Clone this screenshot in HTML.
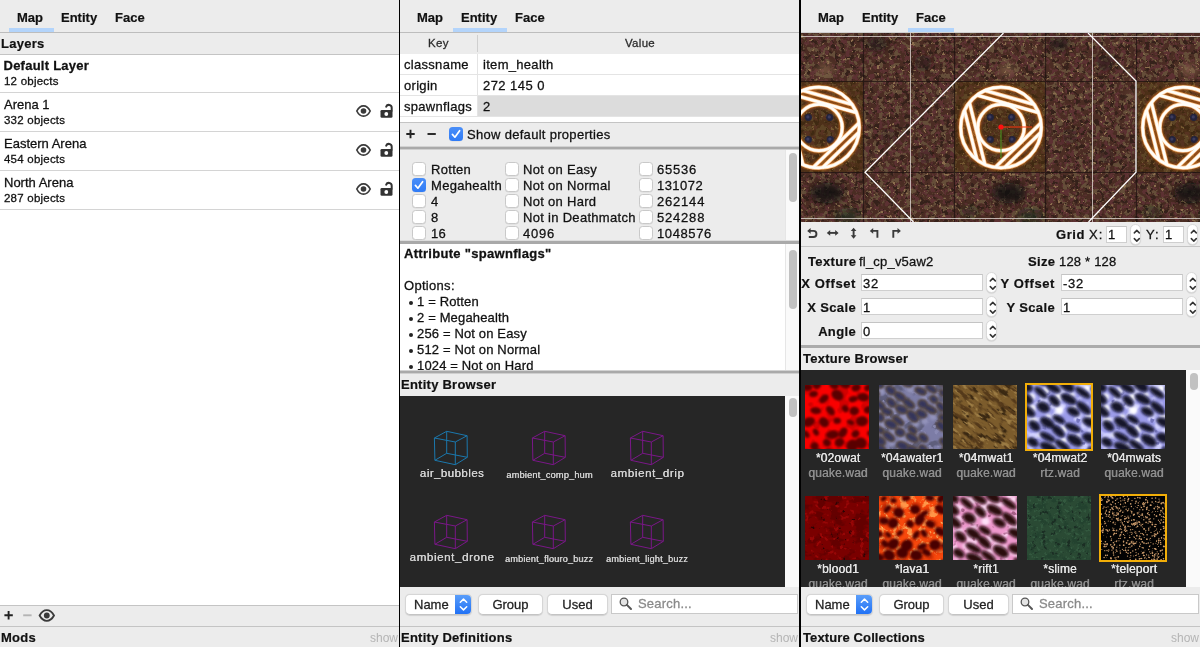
<!DOCTYPE html>
<html>
<head>
<meta charset="utf-8">
<title>Inspector</title>
<style>
*{box-sizing:border-box;margin:0;padding:0}
html,body{width:1200px;height:647px;overflow:hidden;background:#ececec}
body{position:relative;font-family:"Liberation Sans",sans-serif;font-size:13px;color:#111;-webkit-font-smoothing:antialiased}
.abs{position:absolute}
.panel{position:absolute;top:0;height:647px;overflow:hidden;background:#ececec}
#root{position:absolute;left:0;top:0;width:1200px;height:647px;will-change:transform;background:transparent}
#p1{left:0;width:399px}
#p2{left:400px;width:399px}
#p3{left:801px;width:399px}
.vline{position:absolute;top:0;height:647px;background:#000}
.tab{position:absolute;top:10px;font-weight:bold;font-size:13px;line-height:15px;color:#111;white-space:nowrap}
.tabul{position:absolute;top:28px;height:4px;background:#b3d4fb}
.hline{position:absolute;left:0;width:100%;height:1px;background:#c4c4c4}
.hdr{position:absolute;left:0;width:100%;font-weight:bold;font-size:13px;line-height:15px;color:#111;white-space:nowrap}
.hdr span{position:absolute;left:2px;letter-spacing:.25px}
#p1 .hdr span,#p2 .hdr span{left:1px}
#p2 .t{letter-spacing:.3px}
.show{position:absolute;right:1px;font-size:12px;line-height:14px;color:#b4b4b4;font-weight:normal}
.t{position:absolute;white-space:nowrap;line-height:15px;-webkit-text-stroke:.28px currentColor}
.inp,.btn{-webkit-text-stroke:.28px currentColor}
.tab,.hdr span,.lab{-webkit-text-stroke:.2px currentColor}
.b{font-weight:bold}
.split{position:absolute;left:0;width:100%;background:linear-gradient(#d2d2d2 0,#d2d2d2 25%,#a9a9a9 25%,#a9a9a9 75%,#cfcfcf 75%)}

.cb{position:absolute;width:14px;height:14px;border-radius:3.5px;background:#fff;border:1px solid #c9c9c9;box-shadow:0 .5px .5px rgba(0,0,0,.08)}
.cb.on{background:linear-gradient(#4a8ef8,#2f7bf6);border:none}
.cb.on svg{position:absolute;left:0;top:0}
.sb{position:absolute;background:#fafafa;border-left:1px solid #e6e6e6}
.th{position:absolute;width:8px;border-radius:4px;background:#c1c1c1}
.btn{position:absolute;height:21px;border-radius:5px;background:#fff;border:1px solid #d6d6d6;border-bottom-color:#c4c4c4;box-shadow:0 .5px 1px rgba(0,0,0,.12);text-align:center;font-size:13px;line-height:19px;color:#222}
.dark{position:absolute;background:#262626;overflow:hidden}
.el{position:absolute;color:#d4d4d4;text-shadow:.3px 0 0 currentColor;white-space:nowrap;text-align:center;transform:translateX(-50%)}

.inp{position:absolute;height:17px;background:#fff;border:1px solid #cfcfcf;border-top-color:#c4c4c4;font-size:13px;line-height:17px;padding-left:1px;letter-spacing:.7px;white-space:nowrap;overflow:hidden}
.stp{position:absolute;width:11.6px;margin-left:-.3px;height:21px;border-radius:5.8px;background:#fff;border:.5px solid #d9d9d9;box-shadow:0 .5px 1px rgba(0,0,0,.15)}
.stp svg{position:absolute;left:0;top:0}
.lab{position:absolute;letter-spacing:.35px;font-weight:bold;font-size:13px;line-height:15px;white-space:nowrap;text-align:right;color:#111}
.tl{position:absolute;white-space:nowrap;text-align:center;transform:translateX(-50%);margin-left:1px;letter-spacing:.15px;text-shadow:.35px 0 0 currentColor;font-size:12px;line-height:15px}
</style>
</head>
<body>
<div id="root">

<!-- ================= PANEL 1 : MAP ================= -->
<div class="panel" id="p1">
  <div class="tab" style="left:17px">Map</div>
  <div class="tab" style="left:61px">Entity</div>
  <div class="tab" style="left:115px">Face</div>
  <div class="tabul" style="left:9px;width:45px"></div>
  <div class="hline" style="top:32px;background:#bdbdbd"></div>
  <div class="hdr" style="top:36px"><span>Layers</span></div>
  <div class="abs" id="layers" style="left:0;top:54px;width:399px;height:551px;background:#fff">
<div class="abs" style="left:0;top:0px;width:399px;height:39px;border-bottom:1px solid #d4d4d4"><div class="t b" style="left:3.5px;top:4px;font-size:13px;letter-spacing:.25px">Default Layer</div><div class="t" style="left:4px;top:20px;font-size:11.5px;letter-spacing:.22px">12 objects</div></div>
<div class="abs" style="left:0;top:39px;width:399px;height:39px;border-bottom:1px solid #d4d4d4"><div class="t" style="left:4px;top:4px;font-size:13px">Arena 1</div><div class="t" style="left:4px;top:20px;font-size:11.5px;letter-spacing:.22px">332 objects</div><svg class="abs" style="left:355px;top:11px" width="17" height="14" viewBox="0 0 17 14"><path d="M1.8 7 C3.6 3.3 6 1.8 8.5 1.8 C11 1.8 13.4 3.3 15.2 7 C13.4 10.7 11 12.2 8.5 12.2 C6 12.2 3.6 10.7 1.8 7 Z" fill="none" stroke="#3a3a3a" stroke-width="1.7"/><circle cx="8.5" cy="7" r="2.8" fill="#3a3a3a"/></svg><svg class="abs" style="left:379px;top:10px" width="16" height="16" viewBox="0 0 16 16"><rect x="1.5" y="7" width="12" height="7.8" rx="1.3" fill="#333"/><circle cx="7.3" cy="11" r="1.9" fill="#fff"/><path d="M12.7 7.5 V4.7 A2.85 2.85 0 0 0 7.2 3.7" fill="none" stroke="#333" stroke-width="2" stroke-linecap="round"/></svg></div>
<div class="abs" style="left:0;top:78px;width:399px;height:39px;border-bottom:1px solid #d4d4d4"><div class="t" style="left:4px;top:4px;font-size:13px">Eastern Arena</div><div class="t" style="left:4px;top:20px;font-size:11.5px;letter-spacing:.22px">454 objects</div><svg class="abs" style="left:355px;top:11px" width="17" height="14" viewBox="0 0 17 14"><path d="M1.8 7 C3.6 3.3 6 1.8 8.5 1.8 C11 1.8 13.4 3.3 15.2 7 C13.4 10.7 11 12.2 8.5 12.2 C6 12.2 3.6 10.7 1.8 7 Z" fill="none" stroke="#3a3a3a" stroke-width="1.7"/><circle cx="8.5" cy="7" r="2.8" fill="#3a3a3a"/></svg><svg class="abs" style="left:379px;top:10px" width="16" height="16" viewBox="0 0 16 16"><rect x="1.5" y="7" width="12" height="7.8" rx="1.3" fill="#333"/><circle cx="7.3" cy="11" r="1.9" fill="#fff"/><path d="M12.7 7.5 V4.7 A2.85 2.85 0 0 0 7.2 3.7" fill="none" stroke="#333" stroke-width="2" stroke-linecap="round"/></svg></div>
<div class="abs" style="left:0;top:117px;width:399px;height:39px;border-bottom:1px solid #d4d4d4"><div class="t" style="left:4px;top:4px;font-size:13px">North Arena</div><div class="t" style="left:4px;top:20px;font-size:11.5px;letter-spacing:.22px">287 objects</div><svg class="abs" style="left:355px;top:11px" width="17" height="14" viewBox="0 0 17 14"><path d="M1.8 7 C3.6 3.3 6 1.8 8.5 1.8 C11 1.8 13.4 3.3 15.2 7 C13.4 10.7 11 12.2 8.5 12.2 C6 12.2 3.6 10.7 1.8 7 Z" fill="none" stroke="#3a3a3a" stroke-width="1.7"/><circle cx="8.5" cy="7" r="2.8" fill="#3a3a3a"/></svg><svg class="abs" style="left:379px;top:10px" width="16" height="16" viewBox="0 0 16 16"><rect x="1.5" y="7" width="12" height="7.8" rx="1.3" fill="#333"/><circle cx="7.3" cy="11" r="1.9" fill="#fff"/><path d="M12.7 7.5 V4.7 A2.85 2.85 0 0 0 7.2 3.7" fill="none" stroke="#333" stroke-width="2" stroke-linecap="round"/></svg></div>
</div>
  <div class="hline" style="top:54px"></div>
  <div class="hline" style="top:605px"></div>
  <svg class="abs" style="left:0;top:606px" width="70" height="20" viewBox="0 0 70 20">
    <path d="M4.4 9.3 H12.8 M8.6 5.1 V13.5" stroke="#222" stroke-width="1.9" fill="none"/>
    <path d="M23.2 9.3 H31.6" stroke="#b4b4b4" stroke-width="1.9" fill="none"/>
    <path d="M39.6 9.5 C41.6 5.8 44.2 4.2 46.8 4.2 C49.4 4.2 52 5.8 54 9.5 C52 13.2 49.4 14.8 46.8 14.8 C44.2 14.8 41.6 13.2 39.6 9.5 Z" fill="none" stroke="#3a3a3a" stroke-width="1.8"/><circle cx="46.8" cy="9.5" r="2.9" fill="#3a3a3a"/>
  </svg>
  <div class="hline" style="top:626px"></div>
  <div class="hdr" style="top:630px"><span>Mods</span><div class="show" style="top:1px">show</div></div>
</div>
<div class="vline" style="left:399px;width:1px"></div>

<!-- ================= PANEL 2 : ENTITY ================= -->
<div class="panel" id="p2">
  <div class="tab" style="left:17px">Map</div>
  <div class="tab" style="left:61px">Entity</div>
  <div class="tab" style="left:115px">Face</div>
  <div class="tabul" style="left:53px;width:54px"></div>
  <div class="hline" style="top:32px;background:#bdbdbd"></div>
<div class="abs" style="left:0;top:33px;width:399px;height:21px;background:#ececec"></div>
<div class="abs" style="left:0;top:54px;width:399px;height:68px;background:#fff"></div>
<div class="abs" style="left:77px;top:35px;width:1px;height:17px;background:#cfcfcf"></div>
<div class="t" style="left:28px;top:36px;font-size:11.5px;color:#2a2a2a">Key</div>
<div class="t" style="left:225px;top:36px;font-size:11.5px;color:#2a2a2a">Value</div>
<div class="abs" style="left:78px;top:96px;width:321px;height:20px;background:#dcdcdc"></div>
<div class="abs" style="left:0;top:74px;width:399px;height:1px;background:#e4e4e4"></div>
<div class="abs" style="left:0;top:95px;width:399px;height:1px;background:#e4e4e4"></div>
<div class="abs" style="left:0;top:116px;width:399px;height:1px;background:#e4e4e4"></div>
<div class="abs" style="left:77px;top:54px;width:1px;height:63px;background:#e4e4e4"></div>
<div class="t" style="left:4px;top:57px">classname</div><div class="t" style="left:83px;top:57px">item_health</div>
<div class="t" style="left:4px;top:78px">origin</div><div class="t" style="left:83px;top:78px;letter-spacing:.45px">272 145 0</div>
<div class="t" style="left:4px;top:99px">spawnflags</div><div class="t" style="left:83px;top:99px">2</div>
<div class="hline" style="top:122px"></div>
<svg class="abs" style="left:0;top:123px" width="50" height="23" viewBox="0 0 50 23"><path d="M6.3 11 H14.7 M10.5 6.8 V15.2" stroke="#222" stroke-width="1.9" fill="none"/><path d="M27.5 11 H35.8" stroke="#222" stroke-width="1.9" fill="none"/></svg>
<div class="cb on" style="left:49px;top:127px"><svg width="14" height="14" viewBox="0 0 14 14"><path d="M3.4 7.4 L5.9 10.2 L10.6 3.7" fill="none" stroke="#fff" stroke-width="1.7" stroke-linecap="round" stroke-linejoin="round"/></svg></div>
<div class="t" style="left:67px;top:127px">Show default properties</div>
<div class="split" style="top:146px;height:4px"></div>
<div class="abs" style="left:0;top:150px;width:399px;height:90px;overflow:hidden">
<div class="cb" style="left:12px;top:12px"></div><div class="t" style="left:31px;top:12px">Rotten</div>
<div class="cb on" style="left:12px;top:28px"><svg width="14" height="14" viewBox="0 0 14 14"><path d="M3.4 7.4 L5.9 10.2 L10.6 3.7" fill="none" stroke="#fff" stroke-width="1.7" stroke-linecap="round" stroke-linejoin="round"/></svg></div><div class="t" style="left:31px;top:28px">Megahealth</div>
<div class="cb" style="left:12px;top:44px"></div><div class="t" style="left:31px;top:44px;letter-spacing:.8px">4</div>
<div class="cb" style="left:12px;top:60px"></div><div class="t" style="left:31px;top:60px;letter-spacing:.8px">8</div>
<div class="cb" style="left:12px;top:76px"></div><div class="t" style="left:31px;top:76px;letter-spacing:.2px">16</div>
<div class="cb" style="left:105px;top:12px"></div><div class="t" style="left:123px;top:12px">Not on Easy</div>
<div class="cb" style="left:105px;top:28px"></div><div class="t" style="left:123px;top:28px">Not on Normal</div>
<div class="cb" style="left:105px;top:44px"></div><div class="t" style="left:123px;top:44px">Not on Hard</div>
<div class="cb" style="left:105px;top:60px"></div><div class="t" style="left:123px;top:60px">Not in Deathmatch</div>
<div class="cb" style="left:105px;top:76px"></div><div class="t" style="left:123px;top:76px;letter-spacing:.8px">4096</div>
<div class="cb" style="left:239px;top:12px"></div><div class="t" style="left:257px;top:12px;letter-spacing:.8px">65536</div>
<div class="cb" style="left:239px;top:28px"></div><div class="t" style="left:257px;top:28px;letter-spacing:.45px">131072</div>
<div class="cb" style="left:239px;top:44px"></div><div class="t" style="left:257px;top:44px;letter-spacing:.8px">262144</div>
<div class="cb" style="left:239px;top:60px"></div><div class="t" style="left:257px;top:60px;letter-spacing:.8px">524288</div>
<div class="cb" style="left:239px;top:76px"></div><div class="t" style="left:257px;top:76px;letter-spacing:.6px">1048576</div>
<div class="sb" style="left:385px;top:0;width:14px;height:90px"></div><div class="th" style="left:389px;top:3px;height:49px"></div>
</div>
<div class="split" style="top:240px;height:5px;background:linear-gradient(#dcdcdc 0,#dcdcdc 20%,#a9a9a9 20%,#a9a9a9 80%,#d0d0d0 80%)"></div>
<div class="abs" style="left:0;top:244px;width:399px;height:126px;background:#fff;overflow:hidden">
<div class="t b" style="left:4px;top:2px;letter-spacing:.3px">Attribute "spawnflags"</div>
<div class="t" style="left:4px;top:34px">Options:</div>
<div class="abs" style="left:9px;top:57px;width:4px;height:4px;border-radius:2px;background:#222"></div><div class="t" style="left:17px;top:50px;letter-spacing:.15px">1 = Rotten</div>
<div class="abs" style="left:9px;top:73px;width:4px;height:4px;border-radius:2px;background:#222"></div><div class="t" style="left:17px;top:66px;letter-spacing:.15px">2 = Megahealth</div>
<div class="abs" style="left:9px;top:89px;width:4px;height:4px;border-radius:2px;background:#222"></div><div class="t" style="left:17px;top:82px;letter-spacing:.15px">256 = Not on Easy</div>
<div class="abs" style="left:9px;top:105px;width:4px;height:4px;border-radius:2px;background:#222"></div><div class="t" style="left:17px;top:98px;letter-spacing:.15px">512 = Not on Normal</div>
<div class="abs" style="left:9px;top:121px;width:4px;height:4px;border-radius:2px;background:#222"></div><div class="t" style="left:17px;top:114px;letter-spacing:.15px">1024 = Not on Hard</div>
<div class="sb" style="left:385px;top:0;width:14px;height:126px"></div><div class="th" style="left:389px;top:6px;height:59px"></div>
</div>
<div class="split" style="top:370px;height:4px"></div>
<div class="hdr" style="top:377px"><span>Entity Browser</span></div>
<div class="dark" id="eb" style="left:0;top:396px;width:386px;height:191px">
<svg class="abs" style="left:0;top:0" width="386" height="191" viewBox="0 0 386 191"><path d="M34.4 42.0 L46.7 35.3 M46.7 35.3 L67.1 39.7 M67.1 39.7 L55.3 46.0 M55.3 46.0 L34.4 42.0 M34.9 64.3 L46.7 57.3 M46.7 57.3 L67.3 61.3 M67.3 61.3 L55.3 68.7 M55.3 68.7 L34.9 64.3 M34.4 42.0 L34.9 64.3 M46.7 35.3 L46.7 57.3 M67.1 39.7 L67.3 61.3 M55.3 46.0 L55.3 68.7" stroke="#1b78ad" stroke-width="1" fill="none"/><path d="M132.4 42.0 L144.7 35.3 M144.7 35.3 L165.1 39.7 M165.1 39.7 L153.3 46.0 M153.3 46.0 L132.4 42.0 M132.9 64.3 L144.7 57.3 M144.7 57.3 L165.3 61.3 M165.3 61.3 L153.3 68.7 M153.3 68.7 L132.9 64.3 M132.4 42.0 L132.9 64.3 M144.7 35.3 L144.7 57.3 M165.1 39.7 L165.3 61.3 M153.3 46.0 L153.3 68.7" stroke="#7a1788" stroke-width="1" fill="none"/><path d="M230.4 42.0 L242.7 35.3 M242.7 35.3 L263.1 39.7 M263.1 39.7 L251.3 46.0 M251.3 46.0 L230.4 42.0 M230.9 64.3 L242.7 57.3 M242.7 57.3 L263.3 61.3 M263.3 61.3 L251.3 68.7 M251.3 68.7 L230.9 64.3 M230.4 42.0 L230.9 64.3 M242.7 35.3 L242.7 57.3 M263.1 39.7 L263.3 61.3 M251.3 46.0 L251.3 68.7" stroke="#7a1788" stroke-width="1" fill="none"/><path d="M34.4 126.0 L46.7 119.3 M46.7 119.3 L67.1 123.7 M67.1 123.7 L55.3 130.0 M55.3 130.0 L34.4 126.0 M34.9 148.3 L46.7 141.3 M46.7 141.3 L67.3 145.3 M67.3 145.3 L55.3 152.7 M55.3 152.7 L34.9 148.3 M34.4 126.0 L34.9 148.3 M46.7 119.3 L46.7 141.3 M67.1 123.7 L67.3 145.3 M55.3 130.0 L55.3 152.7" stroke="#7a1788" stroke-width="1" fill="none"/><path d="M132.4 126.0 L144.7 119.3 M144.7 119.3 L165.1 123.7 M165.1 123.7 L153.3 130.0 M153.3 130.0 L132.4 126.0 M132.9 148.3 L144.7 141.3 M144.7 141.3 L165.3 145.3 M165.3 145.3 L153.3 152.7 M153.3 152.7 L132.9 148.3 M132.4 126.0 L132.9 148.3 M144.7 119.3 L144.7 141.3 M165.1 123.7 L165.3 145.3 M153.3 130.0 L153.3 152.7" stroke="#7a1788" stroke-width="1" fill="none"/><path d="M230.4 126.0 L242.7 119.3 M242.7 119.3 L263.1 123.7 M263.1 123.7 L251.3 130.0 M251.3 130.0 L230.4 126.0 M230.9 148.3 L242.7 141.3 M242.7 141.3 L263.3 145.3 M263.3 145.3 L251.3 152.7 M251.3 152.7 L230.9 148.3 M230.4 126.0 L230.9 148.3 M242.7 119.3 L242.7 141.3 M263.1 123.7 L263.3 145.3 M251.3 130.0 L251.3 152.7" stroke="#7a1788" stroke-width="1" fill="none"/></svg>
<div class="el" style="left:52.0px;top:70px;font-size:11.5px;line-height:14px;letter-spacing:0.45px">air_bubbles</div>
<div class="el" style="left:149.5px;top:72px;font-size:9.2px;line-height:14px;letter-spacing:0.20px">ambient_comp_hum</div>
<div class="el" style="left:247.5px;top:70px;font-size:11.5px;line-height:14px;letter-spacing:.62px">ambient_drip</div>
<div class="el" style="left:52.0px;top:154px;font-size:11.6px;line-height:14px;letter-spacing:.58px">ambient_drone</div>
<div class="el" style="left:149.0px;top:156px;font-size:9.1px;line-height:14px;letter-spacing:0.20px">ambient_flouro_buzz</div>
<div class="el" style="left:247.0px;top:156px;font-size:9.1px;line-height:14px;letter-spacing:0.20px">ambient_light_buzz</div>
</div>
<div class="sb" style="left:385px;top:396px;width:14px;height:191px;border-left:none"></div><div class="th" style="left:389px;top:398px;height:19px"></div>
<div class="abs bar" style="left:0;top:587px;width:399px;height:39px">
<div class="btn" style="left:5px;top:7px;width:67px;text-align:left;padding-left:8px;overflow:hidden">Name<div class="abs" style="right:-1px;top:-1px;width:17px;height:21px;background:linear-gradient(#5da0fa,#1e6ff5)"><svg width="17" height="21" viewBox="0 0 17 21"><path d="M5.3 8.3 L8.5 5.1 L11.7 8.3 M5.3 12.7 L8.5 15.9 L11.7 12.7" fill="none" stroke="#fff" stroke-width="1.5" stroke-linecap="round" stroke-linejoin="round"/></svg></div></div>
<div class="btn" style="left:78px;top:7px;width:65px">Group</div>
<div class="btn" style="left:147px;top:7px;width:61px">Used</div>
<div class="abs" style="left:211px;top:7px;width:187px;height:20px;background:#fff;border:1px solid #c9c9c9"></div>
<svg class="abs" style="left:218px;top:9px" width="16" height="16" viewBox="0 0 16 16"><circle cx="6" cy="6" r="3.8" fill="#e4e4e4" stroke="#555" stroke-width="1.3"/><path d="M8.9 8.9 L13 13" stroke="#555" stroke-width="2" stroke-linecap="round"/></svg>
<div class="t" style="left:238px;top:9px;color:#8a8a8a;letter-spacing:.2px">Search...</div>
</div>
<div class="hline" style="top:626px"></div>
<div class="hdr" style="top:630px"><span>Entity Definitions</span><div class="show" style="top:1px">show</div></div>
</div>
<div class="vline" style="left:799px;width:2px"></div>

<!-- ================= PANEL 3 : FACE ================= -->
<div class="panel" id="p3">
  <div class="tab" style="left:17px">Map</div>
  <div class="tab" style="left:61px">Entity</div>
  <div class="tab" style="left:115px">Face</div>
  <div class="tabul" style="left:107px;width:46px"></div>
  <div class="hline" style="top:32px;background:#d0d0d0"></div>
<div class="abs" id="tv" style="left:0;top:33px;width:399px;height:189px;background:#54362c;overflow:hidden">
<svg class="abs" style="left:0;top:0" width="399" height="189" viewBox="801 33 399 189">
<defs>
<filter id="fbr" x="0" y="0" width="100%" height="100%" color-interpolation-filters="sRGB">
<feFlood flood-color="#4a2c23" result="base"/>
<feTurbulence type="fractalNoise" baseFrequency="0.2" numOctaves="3" seed="3"/>
<feColorMatrix type="matrix" values="0 0 0 0 0.361  0 0 0 0 0.192  0 0 0 0 0.196  14 0 0 0 -6.86" result="m1"/>
<feTurbulence type="fractalNoise" baseFrequency="0.19" numOctaves="3" seed="8"/>
<feColorMatrix type="matrix" values="0 0 0 0 0.396  0 0 0 0 0.306  0 0 0 0 0.224  14 0 0 0 -7.63" result="m2"/>
<feTurbulence type="fractalNoise" baseFrequency="0.2" numOctaves="3" seed="15"/>
<feColorMatrix type="matrix" values="0 0 0 0 0.208  0 0 0 0 0.129  0 0 0 0 0.102  16 0 0 0 -9.60" result="m3"/>
<feTurbulence type="fractalNoise" baseFrequency="0.26" numOctaves="3" seed="21"/>
<feColorMatrix type="matrix" values="0 0 0 0 0.549  0 0 0 0 0.431  0 0 0 0 0.306  20 0 0 0 -13.80" result="m4"/>
<feMerge><feMergeNode in="base"/><feMergeNode in="m1"/><feMergeNode in="m2"/><feMergeNode in="m3"/><feMergeNode in="m4"/></feMerge>
</filter>
<filter id="fbl" x="-20%" y="-20%" width="140%" height="140%"><feGaussianBlur stdDeviation="3.5"/></filter>
<filter id="fgl" x="-20%" y="-20%" width="140%" height="140%"><feGaussianBlur stdDeviation="1"/></filter>
<g id="emb" fill="none" stroke-linejoin="round">
<g id="embs">
<circle cx="0" cy="0" r="40.3"/>
<circle cx="0" cy="0" r="23.2"/>
<path d="M40.0 -4.5 L-5.8 39.9 M40.0 4.7 L3.4 40.2 M-16.1 37.0 L-31.6 -25.0 M-24.0 32.3 L-36.5 -17.1 M-24.0 -32.4 L37.4 -14.9 M-16.0 -37.0 L33.1 -23.0"/>
</g>
</g>
</defs>
<rect x="801" y="33" width="399" height="189" fill="#54362c"/>
<rect x="801" y="33" width="399" height="189" filter="url(#fbr)"/>
<rect x="772" y="81" width="91" height="91" fill="#503808" opacity=".4"/>
<rect x="954" y="81" width="91" height="91" fill="#503808" opacity=".4"/>
<rect x="1136" y="81" width="91" height="91" fill="#503808" opacity=".4"/>
<g filter="url(#fbl)">
<ellipse cx="827" cy="193" rx="17" ry="10" fill="#0a120e" opacity="0.80"/>
<ellipse cx="848" cy="216" rx="12" ry="6" fill="#10301c" opacity="0.60"/>
<ellipse cx="877" cy="44" rx="11" ry="7" fill="#181412" opacity="0.60"/>
<ellipse cx="825" cy="70" rx="9" ry="6" fill="#9a7858" opacity="0.50"/>
<ellipse cx="888" cy="136" rx="8" ry="8" fill="#2a1c18" opacity="0.35"/>
<ellipse cx="1009" cy="193" rx="17" ry="10" fill="#0a120e" opacity="0.80"/>
<ellipse cx="1030" cy="216" rx="12" ry="6" fill="#10301c" opacity="0.60"/>
<ellipse cx="970" cy="212" rx="9" ry="5" fill="#122a1a" opacity="0.45"/>
<ellipse cx="1059" cy="44" rx="11" ry="7" fill="#181412" opacity="0.60"/>
<ellipse cx="923" cy="63" rx="9" ry="8" fill="#1c1614" opacity="0.55"/>
<ellipse cx="1007" cy="70" rx="9" ry="6" fill="#9a7858" opacity="0.50"/>
<ellipse cx="950" cy="96" rx="7" ry="5" fill="#8a6a50" opacity="0.30"/>
<ellipse cx="1070" cy="136" rx="8" ry="8" fill="#2a1c18" opacity="0.35"/>
<ellipse cx="925" cy="156" rx="8" ry="8" fill="#2a1c18" opacity="0.30"/>
<ellipse cx="1191" cy="193" rx="17" ry="10" fill="#0a120e" opacity="0.80"/>
<ellipse cx="1212" cy="216" rx="12" ry="6" fill="#10301c" opacity="0.60"/>
<ellipse cx="1152" cy="212" rx="9" ry="5" fill="#122a1a" opacity="0.45"/>
<ellipse cx="1105" cy="63" rx="9" ry="8" fill="#1c1614" opacity="0.55"/>
<ellipse cx="1189" cy="70" rx="9" ry="6" fill="#9a7858" opacity="0.50"/>
<ellipse cx="1132" cy="96" rx="7" ry="5" fill="#8a6a50" opacity="0.30"/>
<ellipse cx="1107" cy="156" rx="8" ry="8" fill="#2a1c18" opacity="0.30"/>
</g>
<path d="M863.5 33 V222 M954.5 33 V222 M1045.5 33 V222 M1136.5 33 V222 M801 81.5 H1200 M801 172.5 H1200" stroke="#1e1210" stroke-width="1.2" opacity=".75" fill="none"/>
<g transform="translate(819 127.5)">
<circle cx="-10.7" cy="-10.2" r="3.6" fill="#23233c"/><circle cx="-11.1" cy="-10.6" r="1.6" fill="#3c3c5e"/>
<circle cx="10.7" cy="-10.2" r="3.6" fill="#23233c"/><circle cx="10.3" cy="-10.6" r="1.6" fill="#3c3c5e"/>
<circle cx="-10.7" cy="12.0" r="3.6" fill="#23233c"/><circle cx="-11.1" cy="11.6" r="1.6" fill="#3c3c5e"/>
<circle cx="11.3" cy="12.0" r="3.6" fill="#23233c"/><circle cx="10.9" cy="11.6" r="1.6" fill="#3c3c5e"/>
<use href="#embs" stroke="#e87418" stroke-width="5.6" opacity=".6" filter="url(#fgl)" fill="none"/>
<use href="#embs" stroke="#fbc48e" stroke-width="4.0" fill="none" stroke-linejoin="round"/>
<use href="#embs" stroke="#fffdf8" stroke-width="2.7" fill="none" stroke-linejoin="round"/>
</g>
<g transform="translate(1001 127.5)">
<circle cx="-10.7" cy="-10.2" r="3.6" fill="#23233c"/><circle cx="-11.1" cy="-10.6" r="1.6" fill="#3c3c5e"/>
<circle cx="10.7" cy="-10.2" r="3.6" fill="#23233c"/><circle cx="10.3" cy="-10.6" r="1.6" fill="#3c3c5e"/>
<circle cx="-10.7" cy="12.0" r="3.6" fill="#23233c"/><circle cx="-11.1" cy="11.6" r="1.6" fill="#3c3c5e"/>
<circle cx="11.3" cy="12.0" r="3.6" fill="#23233c"/><circle cx="10.9" cy="11.6" r="1.6" fill="#3c3c5e"/>
<use href="#embs" stroke="#e87418" stroke-width="5.6" opacity=".6" filter="url(#fgl)" fill="none"/>
<use href="#embs" stroke="#fbc48e" stroke-width="4.0" fill="none" stroke-linejoin="round"/>
<use href="#embs" stroke="#fffdf8" stroke-width="2.7" fill="none" stroke-linejoin="round"/>
</g>
<g transform="translate(1183 127.5)">
<circle cx="-10.7" cy="-10.2" r="3.6" fill="#23233c"/><circle cx="-11.1" cy="-10.6" r="1.6" fill="#3c3c5e"/>
<circle cx="10.7" cy="-10.2" r="3.6" fill="#23233c"/><circle cx="10.3" cy="-10.6" r="1.6" fill="#3c3c5e"/>
<circle cx="-10.7" cy="12.0" r="3.6" fill="#23233c"/><circle cx="-11.1" cy="11.6" r="1.6" fill="#3c3c5e"/>
<circle cx="11.3" cy="12.0" r="3.6" fill="#23233c"/><circle cx="10.9" cy="11.6" r="1.6" fill="#3c3c5e"/>
<use href="#embs" stroke="#e87418" stroke-width="5.6" opacity=".6" filter="url(#fgl)" fill="none"/>
<use href="#embs" stroke="#fbc48e" stroke-width="4.0" fill="none" stroke-linejoin="round"/>
<use href="#embs" stroke="#fffdf8" stroke-width="2.7" fill="none" stroke-linejoin="round"/>
</g>
<path d="M910.5 33 V222 M1092.5 33 V222 M801 36.5 H1200 M801 218.5 H1200" stroke="#e8e0dc" stroke-width="1" opacity=".75" fill="none"/>
<path d="M1003.5 33 L865 172.3 L913.5 222 M1088 33 L1136 81 V172.3 L1088.5 222" stroke="#fff" stroke-width="1.3" fill="none"/>
<path d="M1001 127 H1032" stroke="#ff3a10" stroke-width="1"/><path d="M1001 127 V158" stroke="#4a9a20" stroke-width="1"/><circle cx="1001" cy="127" r="2.6" fill="#ff1010"/>
</svg>
</div><!--tv-->
<svg class="abs" style="left:0;top:222px" width="110" height="24" viewBox="0 0 110 24" fill="none" stroke="#3a3a3a" stroke-width="1.9">
<path d="M8.6 8.9 H12.4 A3.05 3.05 0 0 1 12.4 15 H7.8"/><path d="M6.2 8.9 L9.6 6.1 V11.7 Z" fill="#3a3a3a" stroke="none"/>
<path d="M28.2 10.9 H35.2"/><path d="M25.8 10.9 L29.2 8.1 V13.7 Z M37.6 10.9 L34.2 8.1 V13.7 Z" fill="#3a3a3a" stroke="none"/>
<path d="M52.6 8.2 V14.2"/><path d="M52.6 5.7 L49.8 9.1 H55.4 Z M52.6 16.7 L49.8 13.3 H55.4 Z" fill="#3a3a3a" stroke="none"/>
<path d="M71.5 8.9 H76.4 V15.8"/><path d="M68.8 8.9 L72.2 6.1 V11.7 Z" fill="#3a3a3a" stroke="none"/>
<path d="M92.3 15.8 V8.9 H97.2"/><path d="M99.9 8.9 L96.5 6.1 V11.7 Z" fill="#3a3a3a" stroke="none"/>
</svg>
<div class="lab" style="left:255px;top:227px;letter-spacing:.6px">Grid</div>
<div class="t" style="left:288px;top:227px;letter-spacing:1px">X:</div>
<div class="inp" style="left:305px;top:226px;width:21px;line-height:15px">1</div>
<div class="stp" style="left:329px;top:224px"><svg width="12" height="21" viewBox="0 0 12 21"><path d="M3.3 7.9 L5.8 5.4 L8.3 7.9 M3.3 13.6 L5.8 16.1 L8.3 13.6" fill="none" stroke="#333" stroke-width="1.5" stroke-linecap="round" stroke-linejoin="round"/></svg></div>
<div class="t" style="left:345px;top:227px;letter-spacing:1px">Y:</div>
<div class="inp" style="left:362px;top:226px;width:21px;line-height:15px">1</div>
<div class="stp" style="left:386px;top:224px"><svg width="12" height="21" viewBox="0 0 12 21"><path d="M3.3 7.9 L5.8 5.4 L8.3 7.9 M3.3 13.6 L5.8 16.1 L8.3 13.6" fill="none" stroke="#333" stroke-width="1.5" stroke-linecap="round" stroke-linejoin="round"/></svg></div>
<div class="hline" style="top:246px"></div>
<div class="lab" style="left:7px;top:254px">Texture</div><div class="t" style="left:58px;top:254px;letter-spacing:.2px">fl_cp_v5aw2</div>
<div class="lab" style="left:227px;top:254px">Size</div><div class="t" style="left:258px;top:254px;letter-spacing:.2px">128 * 128</div>
<div class="lab" style="left:0;width:55px;top:276px;letter-spacing:.6px">X Offset</div><div class="inp" style="left:60px;top:274px;width:122px">32</div>
<div class="stp" style="left:185px;top:272px"><svg width="12" height="21" viewBox="0 0 12 21"><path d="M3.3 7.9 L5.8 5.4 L8.3 7.9 M3.3 13.6 L5.8 16.1 L8.3 13.6" fill="none" stroke="#333" stroke-width="1.5" stroke-linecap="round" stroke-linejoin="round"/></svg></div>
<div class="lab" style="left:190px;width:64px;top:276px;letter-spacing:.6px">Y Offset</div><div class="inp" style="left:260px;top:274px;width:122px">-32</div>
<div class="stp" style="left:385px;top:272px"><svg width="12" height="21" viewBox="0 0 12 21"><path d="M3.3 7.9 L5.8 5.4 L8.3 7.9 M3.3 13.6 L5.8 16.1 L8.3 13.6" fill="none" stroke="#333" stroke-width="1.5" stroke-linecap="round" stroke-linejoin="round"/></svg></div>
<div class="lab" style="left:0;width:55px;top:300px">X Scale</div><div class="inp" style="left:60px;top:298px;width:122px">1</div>
<div class="stp" style="left:185px;top:296px"><svg width="12" height="21" viewBox="0 0 12 21"><path d="M3.3 7.9 L5.8 5.4 L8.3 7.9 M3.3 13.6 L5.8 16.1 L8.3 13.6" fill="none" stroke="#333" stroke-width="1.5" stroke-linecap="round" stroke-linejoin="round"/></svg></div>
<div class="lab" style="left:190px;width:64px;top:300px">Y Scale</div><div class="inp" style="left:260px;top:298px;width:122px">1</div>
<div class="stp" style="left:385px;top:296px"><svg width="12" height="21" viewBox="0 0 12 21"><path d="M3.3 7.9 L5.8 5.4 L8.3 7.9 M3.3 13.6 L5.8 16.1 L8.3 13.6" fill="none" stroke="#333" stroke-width="1.5" stroke-linecap="round" stroke-linejoin="round"/></svg></div>
<div class="lab" style="left:0;width:55px;top:324px">Angle</div><div class="inp" style="left:60px;top:322px;width:122px">0</div>
<div class="stp" style="left:185px;top:320px"><svg width="12" height="21" viewBox="0 0 12 21"><path d="M3.3 7.9 L5.8 5.4 L8.3 7.9 M3.3 13.6 L5.8 16.1 L8.3 13.6" fill="none" stroke="#333" stroke-width="1.5" stroke-linecap="round" stroke-linejoin="round"/></svg></div>
<div class="split" style="top:345px;height:3px;background:#ababab"></div>
<div class="hdr" style="top:351px"><span>Texture Browser</span></div>
<div class="dark" id="tb" style="left:0;top:370px;width:385px;height:217px">
<svg class="abs" style="left:0;top:0" width="385" height="217" viewBox="0 0 385 217">
<defs>
<clipPath id="c64"><rect x="0" y="0" width="64" height="64"/></clipPath>
<filter id="b07" x="-10%" y="-10%" width="120%" height="120%"><feGaussianBlur stdDeviation="0.8"/></filter>
<filter id="b20" x="-10%" y="-10%" width="120%" height="120%"><feGaussianBlur stdDeviation="1.8"/></filter>
<filter id="f02" x="0" y="0" width="100%" height="100%" color-interpolation-filters="sRGB">
<feFlood flood-color="#fa0000" result="base"/>
<feTurbulence type="fractalNoise" baseFrequency="0.09" numOctaves="2" seed="4"/><feColorMatrix type="matrix" values="0 0 0 0 0.831  0 0 0 0 0.000  0 0 0 0 0.000  6 0 0 0 -3.12" result="l0"/>
<feMerge><feMergeNode in="base"/><feMergeNode in="l0"/></feMerge>
</filter>
<filter id="f4a" x="0" y="0" width="100%" height="100%" color-interpolation-filters="sRGB">
<feFlood flood-color="#7c7ca6" result="base"/>
<feTurbulence type="fractalNoise" baseFrequency="0.09" numOctaves="2" seed="9"/><feColorMatrix type="matrix" values="0 0 0 0 0.369  0 0 0 0 0.369  0 0 0 0 0.486  8 0 0 0 -4.00" result="l0"/>
<feTurbulence type="fractalNoise" baseFrequency="0.2" numOctaves="2" seed="12"/><feColorMatrix type="matrix" values="0 0 0 0 0.541  0 0 0 0 0.541  0 0 0 0 0.706  10 0 0 0 -6.20" result="l1"/>
<feMerge><feMergeNode in="base"/><feMergeNode in="l0"/><feMergeNode in="l1"/></feMerge>
</filter>
<filter id="f4m" x="0" y="0" width="100%" height="100%" color-interpolation-filters="sRGB">
<feFlood flood-color="#7c5c2c" result="base"/>
<feTurbulence type="fractalNoise" baseFrequency="0.06 0.2" numOctaves="3" seed="5"/><feColorMatrix type="matrix" values="0 0 0 0 0.329  0 0 0 0 0.224  0 0 0 0 0.102  7 0 0 0 -3.50" result="l0"/>
<feTurbulence type="fractalNoise" baseFrequency="0.08 0.25" numOctaves="3" seed="17"/><feColorMatrix type="matrix" values="0 0 0 0 0.227  0 0 0 0 0.157  0 0 0 0 0.071  9 0 0 0 -5.31" result="l1"/>
<feTurbulence type="fractalNoise" baseFrequency="0.1 0.3" numOctaves="3" seed="23"/><feColorMatrix type="matrix" values="0 0 0 0 0.612  0 0 0 0 0.486  0 0 0 0 0.267  10 0 0 0 -6.00" result="l2"/>
<feMerge><feMergeNode in="base"/><feMergeNode in="l0"/><feMergeNode in="l1"/><feMergeNode in="l2"/></feMerge>
</filter>
<filter id="fbl1" x="0" y="0" width="100%" height="100%" color-interpolation-filters="sRGB">
<feFlood flood-color="#7a0000" result="base"/>
<feTurbulence type="fractalNoise" baseFrequency="0.08 0.13" numOctaves="3" seed="6"/><feColorMatrix type="matrix" values="0 0 0 0 0.392  0 0 0 0 0.000  0 0 0 0 0.000  8 0 0 0 -4.00" result="l0"/>
<feTurbulence type="fractalNoise" baseFrequency="0.14" numOctaves="3" seed="19"/><feColorMatrix type="matrix" values="0 0 0 0 0.165  0 0 0 0 0.016  0 0 0 0 0.016  14 0 0 0 -9.66" result="l1"/>
<feTurbulence type="fractalNoise" baseFrequency="0.2" numOctaves="2" seed="29"/><feColorMatrix type="matrix" values="0 0 0 0 0.596  0 0 0 0 0.024  0 0 0 0 0.024  10 0 0 0 -6.20" result="l2"/>
<feMerge><feMergeNode in="base"/><feMergeNode in="l0"/><feMergeNode in="l1"/><feMergeNode in="l2"/></feMerge>
</filter>
<filter id="flv" x="0" y="0" width="100%" height="100%" color-interpolation-filters="sRGB">
<feFlood flood-color="#f8480c" result="base"/>
<feTurbulence type="fractalNoise" baseFrequency="0.14" numOctaves="3" seed="31"/><feColorMatrix type="matrix" values="0 0 0 0 1.000  0 0 0 0 0.588  0 0 0 0 0.282  8 0 0 0 -4.16" result="l0"/>
<feTurbulence type="fractalNoise" baseFrequency="0.2" numOctaves="2" seed="35"/><feColorMatrix type="matrix" values="0 0 0 0 1.000  0 0 0 0 0.690  0 0 0 0 0.376  10 0 0 0 -6.80" result="l1"/>
<feMerge><feMergeNode in="base"/><feMergeNode in="l0"/><feMergeNode in="l1"/></feMerge>
</filter>
<filter id="fsl" x="0" y="0" width="100%" height="100%" color-interpolation-filters="sRGB">
<feFlood flood-color="#2a4a34" result="base"/>
<feTurbulence type="fractalNoise" baseFrequency="0.14" numOctaves="3" seed="2"/><feColorMatrix type="matrix" values="0 0 0 0 0.137  0 0 0 0 0.259  0 0 0 0 0.184  6 0 0 0 -3.00" result="l0"/>
<feTurbulence type="fractalNoise" baseFrequency="0.3" numOctaves="3" seed="25"/><feColorMatrix type="matrix" values="0 0 0 0 0.200  0 0 0 0 0.349  0 0 0 0 0.247  8 0 0 0 -4.64" result="l1"/>
<feTurbulence type="fractalNoise" baseFrequency="0.2" numOctaves="3" seed="33"/><feColorMatrix type="matrix" values="0 0 0 0 0.106  0 0 0 0 0.180  0 0 0 0 0.141  9 0 0 0 -5.67" result="l2"/>
<feMerge><feMergeNode in="base"/><feMergeNode in="l0"/><feMergeNode in="l1"/><feMergeNode in="l2"/></feMerge>
</filter>
<filter id="fpw" x="0" y="0" width="100%" height="100%" color-interpolation-filters="sRGB">
<feFlood flood-color="#9c9cea" result="base"/>
<feTurbulence type="fractalNoise" baseFrequency="0.08" numOctaves="2" seed="41"/><feColorMatrix type="matrix" values="0 0 0 0 0.816  0 0 0 0 0.816  0 0 0 0 1.000  6 0 0 0 -2.94" result="l0"/>
<feTurbulence type="fractalNoise" baseFrequency="0.15" numOctaves="2" seed="43"/><feColorMatrix type="matrix" values="0 0 0 0 0.455  0 0 0 0 0.455  0 0 0 0 0.737  8 0 0 0 -5.12" result="l1"/>
<feMerge><feMergeNode in="base"/><feMergeNode in="l0"/><feMergeNode in="l1"/></feMerge>
</filter>
<filter id="frf" x="0" y="0" width="100%" height="100%" color-interpolation-filters="sRGB">
<feFlood flood-color="#ee98cc" result="base"/>
<feTurbulence type="fractalNoise" baseFrequency="0.08" numOctaves="2" seed="45"/><feColorMatrix type="matrix" values="0 0 0 0 1.000  0 0 0 0 0.816  0 0 0 0 0.941  6 0 0 0 -3.00" result="l0"/>
<feTurbulence type="fractalNoise" baseFrequency="0.15" numOctaves="2" seed="47"/><feColorMatrix type="matrix" values="0 0 0 0 0.659  0 0 0 0 0.376  0 0 0 0 0.533  8 0 0 0 -4.96" result="l1"/>
<feMerge><feMergeNode in="base"/><feMergeNode in="l0"/><feMergeNode in="l1"/></feMerge>
</filter>
<g id="e1"><ellipse cx="55.3" cy="-6.3" rx="6.2" ry="3.0" transform="rotate(22 55.3 -6.3)"/><ellipse cx="69.9" cy="4.6" rx="5.5" ry="3.7" transform="rotate(19 69.9 4.6)"/><ellipse cx="39.7" cy="0.7" rx="7.9" ry="4.3" transform="rotate(33 39.7 0.7)"/><ellipse cx="55.8" cy="7.6" rx="8.1" ry="2.9" transform="rotate(35 55.8 7.6)"/><ellipse cx="13.7" cy="-3.9" rx="7.1" ry="2.7" transform="rotate(26 13.7 -3.9)"/><ellipse cx="26.3" cy="2.9" rx="7.4" ry="3.3" transform="rotate(29 26.3 2.9)"/><ellipse cx="41.7" cy="14.0" rx="8.0" ry="3.8" transform="rotate(28 41.7 14.0)"/><ellipse cx="56.6" cy="22.9" rx="8.2" ry="3.5" transform="rotate(41 56.6 22.9)"/><ellipse cx="-0.4" cy="2.2" rx="5.7" ry="4.1" transform="rotate(23 -0.4 2.2)"/><ellipse cx="13.8" cy="7.4" rx="7.3" ry="2.8" transform="rotate(40 13.8 7.4)"/><ellipse cx="27.2" cy="15.8" rx="6.1" ry="3.4" transform="rotate(44 27.2 15.8)"/><ellipse cx="46.3" cy="26.7" rx="6.1" ry="3.5" transform="rotate(27 46.3 26.7)"/><ellipse cx="63.4" cy="37.6" rx="7.8" ry="3.7" transform="rotate(22 63.4 37.6)"/><ellipse cx="-0.3" cy="13.7" rx="6.4" ry="4.1" transform="rotate(37 -0.3 13.7)"/><ellipse cx="16.3" cy="22.1" rx="6.2" ry="4.3" transform="rotate(27 16.3 22.1)"/><ellipse cx="31.8" cy="34.3" rx="6.0" ry="2.8" transform="rotate(30 31.8 34.3)"/><ellipse cx="45.6" cy="42.5" rx="7.7" ry="3.1" transform="rotate(22 45.6 42.5)"/><ellipse cx="62.5" cy="52.9" rx="6.9" ry="4.1" transform="rotate(21 62.5 52.9)"/><ellipse cx="1.0" cy="25.8" rx="7.8" ry="3.7" transform="rotate(38 1.0 25.8)"/><ellipse cx="20.3" cy="37.7" rx="7.4" ry="3.9" transform="rotate(32 20.3 37.7)"/><ellipse cx="31.1" cy="46.1" rx="7.4" ry="3.4" transform="rotate(42 31.1 46.1)"/><ellipse cx="47.8" cy="55.4" rx="8.0" ry="4.3" transform="rotate(31 47.8 55.4)"/><ellipse cx="65.7" cy="66.7" rx="5.4" ry="3.1" transform="rotate(43 65.7 66.7)"/><ellipse cx="7.5" cy="40.7" rx="5.9" ry="3.6" transform="rotate(41 7.5 40.7)"/><ellipse cx="20.5" cy="52.0" rx="8.0" ry="2.9" transform="rotate(28 20.5 52.0)"/><ellipse cx="35.4" cy="60.5" rx="8.1" ry="2.9" transform="rotate(36 35.4 60.5)"/><ellipse cx="53.1" cy="70.4" rx="8.1" ry="3.6" transform="rotate(26 53.1 70.4)"/><ellipse cx="5.8" cy="57.2" rx="5.5" ry="3.5" transform="rotate(30 5.8 57.2)"/><ellipse cx="21.3" cy="62.2" rx="8.2" ry="3.8" transform="rotate(21 21.3 62.2)"/><ellipse cx="-7.8" cy="57.0" rx="5.8" ry="3.0" transform="rotate(33 -7.8 57.0)"/><ellipse cx="10.6" cy="69.7" rx="6.6" ry="3.2" transform="rotate(31 10.6 69.7)"/></g><g id="g1"><circle cx="60.4" cy="3.2" r="3.0"/><circle cx="44.8" cy="10.2" r="3.0"/><circle cx="18.8" cy="5.6" r="3.0"/><circle cx="31.4" cy="12.4" r="3.8"/><circle cx="46.8" cy="23.4" r="3.3"/><circle cx="61.7" cy="32.3" r="3.2"/><circle cx="4.7" cy="11.7" r="3.4"/><circle cx="32.3" cy="25.3" r="4.0"/><circle cx="4.8" cy="23.2" r="4.0"/><circle cx="21.4" cy="31.6" r="2.6"/><circle cx="36.9" cy="43.8" r="3.3"/><circle cx="50.7" cy="51.9" r="3.0"/><circle cx="6.1" cy="35.3" r="3.8"/><circle cx="36.2" cy="55.5" r="3.0"/><circle cx="12.6" cy="50.1" r="2.7"/><circle cx="25.6" cy="61.5" r="3.3"/></g>
<g id="e2"><ellipse cx="54.0" cy="-6.9" rx="8.0" ry="3.8" transform="rotate(20 54.0 -6.9)"/><ellipse cx="71.7" cy="2.9" rx="7.3" ry="4.1" transform="rotate(36 71.7 2.9)"/><ellipse cx="42.1" cy="-1.2" rx="8.1" ry="4.1" transform="rotate(23 42.1 -1.2)"/><ellipse cx="59.1" cy="8.6" rx="7.5" ry="4.2" transform="rotate(20 59.1 8.6)"/><ellipse cx="71.4" cy="18.6" rx="7.0" ry="3.4" transform="rotate(32 71.4 18.6)"/><ellipse cx="12.6" cy="-6.7" rx="6.7" ry="3.8" transform="rotate(20 12.6 -6.7)"/><ellipse cx="27.7" cy="5.1" rx="7.9" ry="4.2" transform="rotate(28 27.7 5.1)"/><ellipse cx="44.2" cy="14.9" rx="7.4" ry="4.3" transform="rotate(36 44.2 14.9)"/><ellipse cx="59.5" cy="21.3" rx="6.7" ry="3.5" transform="rotate(26 59.5 21.3)"/><ellipse cx="-0.2" cy="-1.0" rx="6.6" ry="3.8" transform="rotate(24 -0.2 -1.0)"/><ellipse cx="12.7" cy="9.0" rx="7.5" ry="3.7" transform="rotate(26 12.7 9.0)"/><ellipse cx="30.2" cy="19.4" rx="8.2" ry="3.9" transform="rotate(28 30.2 19.4)"/><ellipse cx="44.5" cy="28.0" rx="6.7" ry="3.5" transform="rotate(44 44.5 28.0)"/><ellipse cx="61.1" cy="35.7" rx="7.3" ry="4.2" transform="rotate(28 61.1 35.7)"/><ellipse cx="0.6" cy="14.7" rx="6.8" ry="3.5" transform="rotate(38 0.6 14.7)"/><ellipse cx="17.4" cy="23.9" rx="7.0" ry="4.0" transform="rotate(18 17.4 23.9)"/><ellipse cx="30.8" cy="30.4" rx="8.0" ry="4.0" transform="rotate(34 30.8 30.4)"/><ellipse cx="47.1" cy="42.0" rx="8.2" ry="3.5" transform="rotate(41 47.1 42.0)"/><ellipse cx="62.1" cy="51.4" rx="6.6" ry="4.1" transform="rotate(34 62.1 51.4)"/><ellipse cx="3.4" cy="28.8" rx="7.2" ry="3.5" transform="rotate(35 3.4 28.8)"/><ellipse cx="20.3" cy="36.9" rx="8.2" ry="3.9" transform="rotate(35 20.3 36.9)"/><ellipse cx="33.5" cy="44.6" rx="7.5" ry="4.3" transform="rotate(40 33.5 44.6)"/><ellipse cx="50.1" cy="56.3" rx="8.0" ry="3.9" transform="rotate(44 50.1 56.3)"/><ellipse cx="66.6" cy="66.1" rx="7.5" ry="4.4" transform="rotate(27 66.6 66.1)"/><ellipse cx="4.1" cy="39.6" rx="6.9" ry="4.5" transform="rotate(43 4.1 39.6)"/><ellipse cx="19.9" cy="50.3" rx="6.8" ry="3.9" transform="rotate(33 19.9 50.3)"/><ellipse cx="36.9" cy="59.1" rx="7.1" ry="4.2" transform="rotate(19 36.9 59.1)"/><ellipse cx="51.7" cy="68.6" rx="7.8" ry="3.8" transform="rotate(37 51.7 68.6)"/><ellipse cx="7.9" cy="54.8" rx="8.2" ry="4.2" transform="rotate(23 7.9 54.8)"/><ellipse cx="22.6" cy="64.2" rx="8.3" ry="3.7" transform="rotate(21 22.6 64.2)"/><ellipse cx="-7.4" cy="58.4" rx="6.7" ry="4.1" transform="rotate(36 -7.4 58.4)"/><ellipse cx="9.7" cy="68.9" rx="6.8" ry="3.6" transform="rotate(27 9.7 68.9)"/></g><g id="g2"><circle cx="59.1" cy="2.6" r="2.9"/><circle cx="17.7" cy="2.7" r="3.4"/><circle cx="32.8" cy="14.5" r="3.6"/><circle cx="49.3" cy="24.3" r="3.5"/><circle cx="4.9" cy="8.5" r="3.7"/><circle cx="17.8" cy="18.5" r="3.2"/><circle cx="35.3" cy="28.9" r="2.8"/><circle cx="49.6" cy="37.5" r="3.2"/><circle cx="22.5" cy="33.3" r="3.3"/><circle cx="35.9" cy="39.9" r="3.7"/><circle cx="52.2" cy="51.5" r="3.2"/><circle cx="8.5" cy="38.3" r="3.0"/><circle cx="25.3" cy="46.3" r="3.7"/><circle cx="38.6" cy="54.1" r="3.8"/><circle cx="25.0" cy="59.8" r="2.8"/></g>
<g id="tp"><circle cx="15.2" cy="34.8" r="0.6"/><circle cx="38.7" cy="40.0" r="0.4"/><circle cx="0.8" cy="53.6" r="0.5"/><circle cx="15.0" cy="63.7" r="0.6"/><circle cx="53.5" cy="30.5" r="0.7"/><circle cx="9.6" cy="40.6" r="0.8"/><circle cx="33.5" cy="47.4" r="0.7"/><circle cx="4.1" cy="48.5" r="0.7"/><circle cx="19.3" cy="2.0" r="0.8"/><circle cx="30.3" cy="46.0" r="0.8"/><circle cx="45.7" cy="59.0" r="0.6"/><circle cx="51.3" cy="28.5" r="0.9"/><circle cx="56.2" cy="6.2" r="0.5"/><circle cx="13.9" cy="61.8" r="0.6"/><circle cx="40.1" cy="19.3" r="0.7"/><circle cx="24.7" cy="22.5" r="0.7"/><circle cx="37.4" cy="57.9" r="0.7"/><circle cx="59.5" cy="54.8" r="0.9"/><circle cx="43.0" cy="10.4" r="0.8"/><circle cx="61.7" cy="57.9" r="0.7"/><circle cx="45.7" cy="13.5" r="0.8"/><circle cx="36.7" cy="18.2" r="0.4"/><circle cx="54.7" cy="63.3" r="0.4"/><circle cx="51.2" cy="26.3" r="0.5"/><circle cx="18.8" cy="49.2" r="0.8"/><circle cx="2.8" cy="39.3" r="0.4"/><circle cx="46.0" cy="21.2" r="0.8"/><circle cx="62.8" cy="32.3" r="0.9"/><circle cx="19.8" cy="4.9" r="0.7"/><circle cx="2.0" cy="12.6" r="0.6"/><circle cx="39.1" cy="10.0" r="0.4"/><circle cx="55.5" cy="20.1" r="0.9"/><circle cx="57.4" cy="24.2" r="0.6"/><circle cx="33.3" cy="41.2" r="0.7"/><circle cx="35.8" cy="39.7" r="0.9"/><circle cx="32.4" cy="27.6" r="0.8"/><circle cx="15.2" cy="19.3" r="0.9"/><circle cx="33.4" cy="35.1" r="0.4"/><circle cx="26.6" cy="37.1" r="0.4"/><circle cx="39.4" cy="40.5" r="0.4"/><circle cx="40.1" cy="29.8" r="0.7"/><circle cx="22.6" cy="45.2" r="0.8"/><circle cx="1.4" cy="3.9" r="0.7"/><circle cx="61.7" cy="16.1" r="0.6"/><circle cx="37.9" cy="20.5" r="0.6"/><circle cx="20.0" cy="23.6" r="0.7"/><circle cx="19.2" cy="24.1" r="0.8"/><circle cx="1.7" cy="36.4" r="0.8"/><circle cx="19.8" cy="14.2" r="0.8"/><circle cx="15.3" cy="12.0" r="0.6"/><circle cx="44.7" cy="6.5" r="0.6"/><circle cx="21.4" cy="53.3" r="0.6"/><circle cx="54.8" cy="10.8" r="0.6"/><circle cx="41.6" cy="56.6" r="0.6"/><circle cx="14.4" cy="7.7" r="0.7"/><circle cx="12.2" cy="51.6" r="0.8"/><circle cx="11.7" cy="17.8" r="0.8"/><circle cx="41.1" cy="51.6" r="0.6"/><circle cx="8.3" cy="18.7" r="0.8"/><circle cx="17.4" cy="22.2" r="0.6"/><circle cx="26.9" cy="26.2" r="0.9"/><circle cx="10.0" cy="0.3" r="0.9"/><circle cx="56.3" cy="63.2" r="0.6"/><circle cx="60.8" cy="59.4" r="0.5"/><circle cx="47.7" cy="53.5" r="0.7"/><circle cx="33.2" cy="18.5" r="0.6"/><circle cx="14.6" cy="4.4" r="0.7"/><circle cx="18.4" cy="51.9" r="0.4"/><circle cx="57.8" cy="44.4" r="0.9"/><circle cx="57.4" cy="57.6" r="0.7"/><circle cx="0.8" cy="47.7" r="0.5"/><circle cx="19.2" cy="42.4" r="0.7"/><circle cx="26.5" cy="60.1" r="0.7"/><circle cx="21.8" cy="16.2" r="0.8"/><circle cx="30.5" cy="50.1" r="0.6"/><circle cx="12.6" cy="34.2" r="0.8"/><circle cx="11.0" cy="50.7" r="0.9"/><circle cx="51.6" cy="52.7" r="0.4"/><circle cx="40.2" cy="55.2" r="0.4"/><circle cx="17.4" cy="17.2" r="0.7"/><circle cx="27.1" cy="30.3" r="0.8"/><circle cx="0.1" cy="3.5" r="0.5"/><circle cx="8.0" cy="4.4" r="0.9"/><circle cx="54.7" cy="5.5" r="0.7"/><circle cx="20.2" cy="20.1" r="0.6"/><circle cx="41.4" cy="37.5" r="0.6"/><circle cx="12.2" cy="21.0" r="0.5"/><circle cx="35.6" cy="45.8" r="0.6"/><circle cx="5.1" cy="11.4" r="0.6"/><circle cx="38.7" cy="50.1" r="0.6"/><circle cx="51.3" cy="39.9" r="0.6"/><circle cx="23.8" cy="31.8" r="0.8"/><circle cx="26.9" cy="44.4" r="0.6"/><circle cx="15.7" cy="34.3" r="0.7"/><circle cx="4.6" cy="27.2" r="0.6"/><circle cx="56.3" cy="59.9" r="0.6"/><circle cx="57.5" cy="50.6" r="0.5"/><circle cx="29.7" cy="7.9" r="0.8"/><circle cx="42.4" cy="56.8" r="0.8"/><circle cx="42.7" cy="47.0" r="0.7"/><circle cx="6.6" cy="37.6" r="0.4"/><circle cx="9.2" cy="49.6" r="0.4"/><circle cx="5.9" cy="6.4" r="0.8"/><circle cx="11.5" cy="1.5" r="0.8"/><circle cx="7.8" cy="54.0" r="0.7"/><circle cx="53.5" cy="61.0" r="0.7"/><circle cx="51.1" cy="2.3" r="0.8"/><circle cx="32.7" cy="45.8" r="0.5"/><circle cx="47.9" cy="59.8" r="0.4"/><circle cx="20.8" cy="36.1" r="0.8"/><circle cx="15.5" cy="11.5" r="0.5"/><circle cx="39.4" cy="48.2" r="0.6"/><circle cx="23.5" cy="25.4" r="0.6"/><circle cx="26.8" cy="5.3" r="0.7"/><circle cx="62.3" cy="26.4" r="0.8"/><circle cx="10.3" cy="44.2" r="0.8"/><circle cx="43.1" cy="33.1" r="0.6"/><circle cx="41.1" cy="57.4" r="0.5"/><circle cx="6.1" cy="47.9" r="0.9"/><circle cx="33.1" cy="28.4" r="0.8"/><circle cx="11.9" cy="17.1" r="0.5"/><circle cx="37.5" cy="20.2" r="0.5"/><circle cx="44.2" cy="61.0" r="0.5"/><circle cx="45.1" cy="26.4" r="0.8"/><circle cx="37.4" cy="17.1" r="0.5"/><circle cx="1.5" cy="30.7" r="0.6"/><circle cx="11.0" cy="23.1" r="0.6"/><circle cx="49.5" cy="9.2" r="0.9"/><circle cx="30.7" cy="38.3" r="0.6"/><circle cx="53.4" cy="52.6" r="0.7"/><circle cx="30.8" cy="46.1" r="0.8"/><circle cx="25.6" cy="46.9" r="0.9"/><circle cx="29.9" cy="14.7" r="0.5"/><circle cx="45.9" cy="43.2" r="0.9"/><circle cx="54.6" cy="15.5" r="0.5"/><circle cx="16.6" cy="12.0" r="0.8"/><circle cx="55.0" cy="57.6" r="0.5"/><circle cx="55.4" cy="20.1" r="0.6"/><circle cx="46.7" cy="5.5" r="0.4"/><circle cx="53.4" cy="18.7" r="0.6"/><circle cx="37.1" cy="43.2" r="0.4"/><circle cx="21.4" cy="27.9" r="0.6"/><circle cx="13.4" cy="37.4" r="0.9"/><circle cx="25.0" cy="34.8" r="0.5"/><circle cx="17.6" cy="42.6" r="0.5"/><circle cx="56.8" cy="58.2" r="0.4"/><circle cx="60.2" cy="24.0" r="0.8"/><circle cx="48.5" cy="18.9" r="0.7"/><circle cx="41.9" cy="51.6" r="0.5"/><circle cx="48.3" cy="61.5" r="0.7"/><circle cx="34.3" cy="7.3" r="0.6"/><circle cx="22.5" cy="46.0" r="0.7"/><circle cx="36.2" cy="11.6" r="0.7"/><circle cx="40.4" cy="11.5" r="0.8"/><circle cx="41.9" cy="7.9" r="0.9"/><circle cx="9.0" cy="21.2" r="0.8"/><circle cx="38.2" cy="35.5" r="0.7"/><circle cx="29.3" cy="20.0" r="0.5"/><circle cx="4.4" cy="45.8" r="0.8"/><circle cx="34.8" cy="47.3" r="0.6"/><circle cx="17.0" cy="24.5" r="0.8"/><circle cx="2.7" cy="32.3" r="0.5"/><circle cx="49.2" cy="22.7" r="0.6"/><circle cx="25.8" cy="34.7" r="0.8"/><circle cx="22.6" cy="54.2" r="0.5"/><circle cx="17.3" cy="6.4" r="0.5"/><circle cx="49.9" cy="46.5" r="0.5"/><circle cx="12.1" cy="26.7" r="0.8"/><circle cx="52.2" cy="47.9" r="0.7"/><circle cx="9.4" cy="25.5" r="0.5"/><circle cx="33.8" cy="36.4" r="0.5"/><circle cx="16.0" cy="50.0" r="0.4"/><circle cx="51.4" cy="57.0" r="0.9"/><circle cx="24.5" cy="35.4" r="0.7"/><circle cx="40.6" cy="62.5" r="0.7"/><circle cx="19.2" cy="55.0" r="0.6"/><circle cx="38.5" cy="46.5" r="0.4"/><circle cx="49.3" cy="42.4" r="0.6"/><circle cx="33.5" cy="29.5" r="0.5"/><circle cx="33.9" cy="2.4" r="0.7"/><circle cx="41.3" cy="28.4" r="0.7"/><circle cx="61.4" cy="57.1" r="0.5"/><circle cx="50.7" cy="39.9" r="0.4"/><circle cx="23.0" cy="14.9" r="0.4"/><circle cx="34.5" cy="59.5" r="0.6"/><circle cx="55.7" cy="44.5" r="0.5"/><circle cx="54.9" cy="38.5" r="0.9"/><circle cx="45.8" cy="47.3" r="0.6"/><circle cx="51.6" cy="59.6" r="0.8"/><circle cx="28.0" cy="48.4" r="0.6"/><circle cx="7.0" cy="2.7" r="0.4"/><circle cx="12.8" cy="10.3" r="0.6"/><circle cx="44.8" cy="34.4" r="0.6"/><circle cx="41.6" cy="19.5" r="0.6"/><circle cx="48.5" cy="25.7" r="0.5"/><circle cx="57.6" cy="46.1" r="0.6"/><circle cx="23.7" cy="33.9" r="0.7"/><circle cx="14.3" cy="0.2" r="0.5"/><circle cx="50.1" cy="9.2" r="0.6"/><circle cx="12.5" cy="13.4" r="0.5"/><circle cx="25.8" cy="10.8" r="0.4"/><circle cx="7.0" cy="10.8" r="0.6"/><circle cx="3.8" cy="1.4" r="0.6"/><circle cx="26.1" cy="45.0" r="0.4"/><circle cx="25.8" cy="25.4" r="0.4"/><circle cx="61.8" cy="14.0" r="0.4"/><circle cx="30.4" cy="10.5" r="0.7"/><circle cx="22.2" cy="7.9" r="0.4"/><circle cx="46.6" cy="17.6" r="0.8"/><circle cx="29.8" cy="59.7" r="0.6"/><circle cx="16.0" cy="17.0" r="0.8"/><circle cx="40.3" cy="22.1" r="0.4"/><circle cx="43.7" cy="62.0" r="0.7"/><circle cx="0.2" cy="1.9" r="0.4"/><circle cx="10.9" cy="2.3" r="0.4"/><circle cx="41.9" cy="57.6" r="0.5"/><circle cx="62.3" cy="30.5" r="0.8"/><circle cx="58.7" cy="60.2" r="0.4"/><circle cx="19.5" cy="38.8" r="0.9"/><circle cx="5.6" cy="18.8" r="0.8"/><circle cx="7.3" cy="25.0" r="0.6"/><circle cx="43.5" cy="59.4" r="0.5"/><circle cx="47.3" cy="47.0" r="0.8"/><circle cx="35.4" cy="59.1" r="0.6"/><circle cx="26.5" cy="14.7" r="0.8"/><circle cx="30.8" cy="17.2" r="0.5"/><circle cx="46.1" cy="38.8" r="0.8"/><circle cx="24.8" cy="31.2" r="0.5"/><circle cx="45.5" cy="1.5" r="0.6"/><circle cx="48.5" cy="43.3" r="0.4"/><circle cx="15.2" cy="54.0" r="0.7"/><circle cx="56.2" cy="55.8" r="0.6"/><circle cx="57.4" cy="46.9" r="0.6"/><circle cx="23.7" cy="4.6" r="0.6"/><circle cx="61.2" cy="6.7" r="0.7"/><circle cx="7.0" cy="5.2" r="0.7"/><circle cx="15.4" cy="3.1" r="0.5"/><circle cx="41.3" cy="37.5" r="0.4"/><circle cx="14.7" cy="61.9" r="0.5"/><circle cx="36.0" cy="26.9" r="0.8"/><circle cx="38.7" cy="50.5" r="0.7"/><circle cx="12.0" cy="11.4" r="0.4"/><circle cx="52.8" cy="7.2" r="0.4"/><circle cx="61.9" cy="12.8" r="0.8"/><circle cx="5.5" cy="29.8" r="0.5"/><circle cx="53.1" cy="39.4" r="0.7"/><circle cx="48.7" cy="55.8" r="0.6"/><circle cx="38.6" cy="28.5" r="0.5"/><circle cx="53.5" cy="38.0" r="0.8"/><circle cx="13.2" cy="34.5" r="0.6"/><circle cx="46.6" cy="4.9" r="0.6"/><circle cx="31.0" cy="4.6" r="0.7"/><circle cx="47.1" cy="27.1" r="0.7"/><circle cx="38.8" cy="13.7" r="0.6"/><circle cx="63.7" cy="21.5" r="0.6"/><circle cx="5.4" cy="13.9" r="0.5"/><circle cx="59.6" cy="46.5" r="0.8"/><circle cx="63.1" cy="39.2" r="0.9"/><circle cx="34.3" cy="26.8" r="0.9"/><circle cx="57.8" cy="60.8" r="0.6"/><circle cx="49.5" cy="26.0" r="0.9"/><circle cx="58.9" cy="18.7" r="0.9"/><circle cx="11.8" cy="6.1" r="0.8"/><circle cx="18.8" cy="33.2" r="0.7"/><circle cx="2.6" cy="47.7" r="0.5"/><circle cx="27.7" cy="22.1" r="0.8"/><circle cx="47.8" cy="18.4" r="0.5"/><circle cx="19.2" cy="26.3" r="0.4"/><circle cx="9.8" cy="48.8" r="0.8"/><circle cx="62.5" cy="62.7" r="0.8"/><circle cx="23.8" cy="10.3" r="0.6"/><circle cx="29.6" cy="33.7" r="0.7"/><circle cx="23.0" cy="54.6" r="0.5"/><circle cx="29.6" cy="56.8" r="0.8"/><circle cx="19.0" cy="15.5" r="0.8"/><circle cx="0.6" cy="8.4" r="0.7"/><circle cx="34.3" cy="10.6" r="0.4"/><circle cx="13.1" cy="49.3" r="0.6"/><circle cx="62.7" cy="50.3" r="0.9"/><circle cx="2.2" cy="11.8" r="0.4"/><circle cx="27.7" cy="21.6" r="0.4"/><circle cx="34.9" cy="6.0" r="0.6"/><circle cx="15.8" cy="51.3" r="0.6"/><circle cx="16.7" cy="2.8" r="0.6"/><circle cx="40.2" cy="43.2" r="0.9"/><circle cx="51.7" cy="15.8" r="0.5"/><circle cx="48.5" cy="50.5" r="0.7"/><circle cx="53.2" cy="35.3" r="0.5"/><circle cx="10.8" cy="1.1" r="0.7"/><circle cx="57.4" cy="58.0" r="0.6"/><circle cx="42.6" cy="59.4" r="0.8"/><circle cx="38.6" cy="26.5" r="0.7"/><circle cx="10.9" cy="11.7" r="0.7"/><circle cx="63.5" cy="35.0" r="0.6"/><circle cx="22.5" cy="29.1" r="0.8"/><circle cx="29.0" cy="61.4" r="0.5"/><circle cx="20.2" cy="33.4" r="0.6"/><circle cx="54.5" cy="53.0" r="0.9"/><circle cx="39.2" cy="2.0" r="0.7"/><circle cx="35.2" cy="31.2" r="0.5"/><circle cx="45.4" cy="58.3" r="0.5"/><circle cx="42.8" cy="23.8" r="0.7"/><circle cx="57.3" cy="61.5" r="0.7"/><circle cx="12.5" cy="58.9" r="0.5"/><circle cx="24.5" cy="53.0" r="0.6"/><circle cx="17.3" cy="60.8" r="0.9"/><circle cx="20.3" cy="25.1" r="0.5"/><circle cx="8.4" cy="16.0" r="0.9"/><circle cx="5.1" cy="14.7" r="0.5"/><circle cx="5.1" cy="33.7" r="0.8"/><circle cx="53.7" cy="40.4" r="0.8"/><circle cx="0.3" cy="18.1" r="0.9"/><circle cx="4.4" cy="17.1" r="0.6"/><circle cx="17.1" cy="35.0" r="0.4"/><circle cx="15.1" cy="61.3" r="0.5"/><circle cx="58.0" cy="11.4" r="0.9"/><circle cx="43.2" cy="41.4" r="0.5"/><circle cx="3.5" cy="48.6" r="0.5"/><circle cx="12.1" cy="52.7" r="0.8"/><circle cx="3.1" cy="61.5" r="0.7"/><circle cx="24.5" cy="6.9" r="0.6"/><circle cx="63.2" cy="18.0" r="0.5"/><circle cx="9.3" cy="8.1" r="0.6"/><circle cx="58.6" cy="4.9" r="0.5"/><circle cx="60.1" cy="63.8" r="0.9"/><circle cx="15.7" cy="22.7" r="0.9"/><circle cx="31.0" cy="45.0" r="0.6"/><circle cx="1.4" cy="22.1" r="0.8"/><circle cx="50.0" cy="36.4" r="0.6"/><circle cx="34.4" cy="28.3" r="0.7"/><circle cx="53.3" cy="12.8" r="0.7"/><circle cx="59.7" cy="54.3" r="0.5"/><circle cx="61.7" cy="53.8" r="0.5"/><circle cx="17.0" cy="13.0" r="0.4"/><circle cx="62.6" cy="26.2" r="0.8"/><circle cx="7.3" cy="0.9" r="0.8"/><circle cx="50.8" cy="63.5" r="0.7"/><circle cx="33.6" cy="49.0" r="0.4"/><circle cx="34.6" cy="28.2" r="0.5"/><circle cx="38.4" cy="20.7" r="0.7"/><circle cx="23.9" cy="20.4" r="0.6"/><circle cx="38.5" cy="62.8" r="0.9"/><circle cx="55.2" cy="53.5" r="0.5"/><circle cx="62.5" cy="17.3" r="0.5"/><circle cx="32.1" cy="46.9" r="0.6"/><circle cx="41.3" cy="18.1" r="0.9"/><circle cx="29.0" cy="30.6" r="0.7"/><circle cx="56.0" cy="63.1" r="0.7"/><circle cx="28.3" cy="39.5" r="0.4"/><circle cx="27.2" cy="54.2" r="0.8"/><circle cx="3.8" cy="54.7" r="0.6"/><circle cx="62.8" cy="23.5" r="0.5"/><circle cx="35.1" cy="56.6" r="0.6"/><circle cx="55.5" cy="45.5" r="0.6"/><circle cx="19.2" cy="32.3" r="0.6"/><circle cx="23.8" cy="41.7" r="0.8"/><circle cx="37.4" cy="9.4" r="0.5"/><circle cx="23.7" cy="39.3" r="0.5"/><circle cx="5.2" cy="20.5" r="0.5"/><circle cx="1.9" cy="34.5" r="0.9"/><circle cx="34.2" cy="47.2" r="0.8"/><circle cx="53.6" cy="58.4" r="0.6"/><circle cx="43.7" cy="7.7" r="0.8"/><circle cx="24.2" cy="30.4" r="0.8"/><circle cx="18.4" cy="12.2" r="0.8"/><circle cx="38.3" cy="5.4" r="0.4"/><circle cx="22.5" cy="0.5" r="0.8"/><circle cx="11.8" cy="17.5" r="0.6"/><circle cx="32.7" cy="27.7" r="0.7"/><circle cx="42.2" cy="27.9" r="0.4"/><circle cx="62.7" cy="44.2" r="0.4"/><circle cx="28.3" cy="48.2" r="0.9"/><circle cx="4.2" cy="0.6" r="0.6"/><circle cx="27.0" cy="57.2" r="0.8"/><circle cx="21.2" cy="26.8" r="0.7"/><circle cx="56.6" cy="12.9" r="0.6"/><circle cx="5.7" cy="41.0" r="0.4"/><circle cx="59.8" cy="33.5" r="0.7"/><circle cx="5.5" cy="14.9" r="0.6"/><circle cx="54.9" cy="34.5" r="0.5"/><circle cx="62.9" cy="42.3" r="0.7"/><circle cx="13.0" cy="19.1" r="0.8"/><circle cx="8.5" cy="34.0" r="0.7"/><circle cx="22.7" cy="49.2" r="0.9"/><circle cx="54.9" cy="47.2" r="0.5"/><circle cx="3.8" cy="27.7" r="0.6"/><circle cx="12.4" cy="55.8" r="0.5"/><circle cx="52.7" cy="60.0" r="0.5"/><circle cx="58.5" cy="25.4" r="0.5"/><circle cx="11.9" cy="2.4" r="0.6"/><circle cx="24.6" cy="54.5" r="0.8"/><circle cx="3.6" cy="25.7" r="0.6"/><circle cx="11.4" cy="16.0" r="0.5"/><circle cx="44.4" cy="21.8" r="0.5"/><circle cx="14.1" cy="28.3" r="0.7"/><circle cx="15.7" cy="44.8" r="0.5"/><circle cx="42.9" cy="39.0" r="0.5"/><circle cx="48.1" cy="25.2" r="0.7"/><circle cx="38.3" cy="40.2" r="0.6"/><circle cx="3.6" cy="50.3" r="0.8"/><circle cx="31.4" cy="37.1" r="0.5"/><circle cx="57.5" cy="43.9" r="0.5"/><circle cx="52.3" cy="63.1" r="0.6"/><circle cx="63.7" cy="30.9" r="0.5"/><circle cx="45.9" cy="21.7" r="0.8"/><circle cx="37.3" cy="6.9" r="0.7"/><circle cx="54.5" cy="30.6" r="0.7"/><circle cx="55.2" cy="28.6" r="0.6"/><circle cx="37.3" cy="52.7" r="0.5"/><circle cx="6.0" cy="48.7" r="0.7"/><circle cx="19.4" cy="57.1" r="0.8"/><circle cx="34.7" cy="63.3" r="0.8"/><circle cx="47.9" cy="18.6" r="0.4"/><circle cx="43.4" cy="47.0" r="0.6"/><circle cx="30.6" cy="36.3" r="0.5"/><circle cx="44.6" cy="36.0" r="0.6"/><circle cx="7.0" cy="35.5" r="0.6"/><circle cx="46.4" cy="11.0" r="0.6"/><circle cx="12.6" cy="26.1" r="0.7"/><circle cx="6.8" cy="3.5" r="0.6"/><circle cx="12.9" cy="32.3" r="0.5"/><circle cx="6.5" cy="34.4" r="0.9"/><circle cx="55.6" cy="33.0" r="0.6"/><circle cx="4.2" cy="17.7" r="0.6"/><circle cx="60.3" cy="7.5" r="0.9"/><circle cx="30.5" cy="27.8" r="0.5"/><circle cx="61.6" cy="11.9" r="0.7"/><circle cx="32.7" cy="12.8" r="0.5"/><circle cx="63.1" cy="50.6" r="0.8"/><circle cx="57.8" cy="6.3" r="0.8"/><circle cx="48.0" cy="14.4" r="0.6"/><circle cx="62.4" cy="20.9" r="0.8"/><circle cx="10.6" cy="42.7" r="0.5"/><circle cx="32.6" cy="23.8" r="0.8"/><circle cx="47.7" cy="32.3" r="0.7"/><circle cx="27.4" cy="51.5" r="0.5"/><circle cx="34.8" cy="37.5" r="0.6"/><circle cx="3.0" cy="10.9" r="0.7"/><circle cx="13.5" cy="48.5" r="0.7"/><circle cx="61.0" cy="54.3" r="0.8"/><circle cx="23.8" cy="2.8" r="0.7"/><circle cx="47.7" cy="58.9" r="0.5"/><circle cx="10.1" cy="62.8" r="0.8"/><circle cx="31.0" cy="47.3" r="0.5"/><circle cx="34.8" cy="42.8" r="0.7"/><circle cx="10.3" cy="8.8" r="0.7"/><circle cx="56.6" cy="8.8" r="0.4"/><circle cx="5.3" cy="50.3" r="0.6"/><circle cx="29.2" cy="63.6" r="0.7"/><circle cx="16.9" cy="44.9" r="0.4"/><circle cx="18.0" cy="44.7" r="0.5"/><circle cx="2.1" cy="33.2" r="0.6"/><circle cx="62.2" cy="6.5" r="0.8"/><circle cx="24.9" cy="51.5" r="0.6"/><circle cx="42.7" cy="20.9" r="0.5"/><circle cx="29.0" cy="51.2" r="0.6"/><circle cx="14.7" cy="26.6" r="0.4"/><circle cx="20.2" cy="36.7" r="0.7"/><circle cx="38.2" cy="18.6" r="0.4"/><circle cx="1.7" cy="21.7" r="0.5"/><circle cx="36.4" cy="17.0" r="0.8"/><circle cx="38.5" cy="42.4" r="0.8"/><circle cx="33.4" cy="27.3" r="0.6"/><circle cx="4.0" cy="50.8" r="0.7"/><circle cx="6.4" cy="59.3" r="0.7"/><circle cx="39.9" cy="28.1" r="0.5"/><circle cx="64.0" cy="10.8" r="0.6"/><circle cx="64.0" cy="7.8" r="0.6"/><circle cx="30.7" cy="15.8" r="0.9"/><circle cx="26.5" cy="0.7" r="0.6"/><circle cx="0.3" cy="45.3" r="0.8"/><circle cx="58.0" cy="3.1" r="0.7"/><circle cx="19.5" cy="30.2" r="0.6"/><circle cx="19.5" cy="8.5" r="0.7"/><circle cx="5.7" cy="61.7" r="0.4"/><circle cx="61.7" cy="12.3" r="0.4"/><circle cx="47.7" cy="34.0" r="0.8"/><circle cx="32.5" cy="40.4" r="0.4"/><circle cx="43.1" cy="32.8" r="0.9"/><circle cx="0.4" cy="4.4" r="0.7"/><circle cx="59.3" cy="27.0" r="0.8"/><circle cx="35.9" cy="25.0" r="0.6"/><circle cx="38.5" cy="1.8" r="0.6"/><circle cx="47.2" cy="16.5" r="0.6"/><circle cx="16.4" cy="22.9" r="0.7"/><circle cx="47.6" cy="61.2" r="0.6"/><circle cx="13.0" cy="21.6" r="0.4"/><circle cx="15.3" cy="37.4" r="0.7"/><circle cx="15.5" cy="11.6" r="0.4"/><circle cx="11.4" cy="32.1" r="0.5"/><circle cx="56.6" cy="36.2" r="0.6"/><circle cx="27.6" cy="2.6" r="0.8"/><circle cx="48.1" cy="23.3" r="0.8"/><circle cx="17.4" cy="14.0" r="0.5"/><circle cx="12.6" cy="38.8" r="0.7"/><circle cx="46.6" cy="6.6" r="0.8"/><circle cx="30.6" cy="24.2" r="0.7"/><circle cx="27.7" cy="12.8" r="0.6"/><circle cx="41.3" cy="45.8" r="0.9"/><circle cx="12.4" cy="57.0" r="0.8"/><circle cx="45.6" cy="62.7" r="0.5"/><circle cx="49.7" cy="57.6" r="0.5"/><circle cx="38.1" cy="60.6" r="0.5"/><circle cx="54.7" cy="58.0" r="0.6"/><circle cx="9.3" cy="13.8" r="0.8"/><circle cx="27.0" cy="20.2" r="0.6"/><circle cx="59.4" cy="16.3" r="0.4"/><circle cx="60.7" cy="20.3" r="0.6"/><circle cx="62.5" cy="18.0" r="0.4"/><circle cx="56.8" cy="15.6" r="0.5"/><circle cx="60.0" cy="14.7" r="0.9"/><circle cx="21.3" cy="19.4" r="0.5"/><circle cx="34.7" cy="35.8" r="0.6"/><circle cx="32.5" cy="19.1" r="0.8"/><circle cx="59.8" cy="48.2" r="0.8"/><circle cx="4.5" cy="16.0" r="0.5"/><circle cx="9.9" cy="62.0" r="0.9"/><circle cx="58.5" cy="35.7" r="0.5"/><circle cx="27.3" cy="3.6" r="0.9"/><circle cx="17.0" cy="18.4" r="0.9"/><circle cx="12.8" cy="59.0" r="0.6"/><circle cx="42.5" cy="6.8" r="0.8"/><circle cx="25.5" cy="22.1" r="0.7"/><circle cx="38.0" cy="16.1" r="0.5"/><circle cx="36.8" cy="1.6" r="0.8"/><circle cx="22.0" cy="10.9" r="0.6"/><circle cx="7.3" cy="20.3" r="0.7"/><circle cx="26.0" cy="21.4" r="0.5"/><circle cx="31.1" cy="49.8" r="0.6"/><circle cx="49.1" cy="30.9" r="0.5"/><circle cx="10.9" cy="54.2" r="0.6"/><circle cx="24.5" cy="33.0" r="0.8"/><circle cx="24.0" cy="23.1" r="0.6"/><circle cx="0.7" cy="34.9" r="0.6"/><circle cx="31.7" cy="28.9" r="0.6"/><circle cx="45.8" cy="11.9" r="0.9"/><circle cx="7.3" cy="55.4" r="0.5"/><circle cx="50.9" cy="16.7" r="0.4"/><circle cx="34.6" cy="53.7" r="0.8"/><circle cx="56.1" cy="62.7" r="0.4"/><circle cx="24.3" cy="6.8" r="0.8"/><circle cx="28.9" cy="47.6" r="0.8"/><circle cx="63.9" cy="43.3" r="0.8"/><circle cx="35.1" cy="5.2" r="0.8"/><circle cx="5.8" cy="5.5" r="0.8"/><circle cx="18.0" cy="42.4" r="0.4"/><circle cx="13.5" cy="45.8" r="0.4"/><circle cx="32.7" cy="60.0" r="0.5"/><circle cx="45.1" cy="47.6" r="0.7"/><circle cx="49.0" cy="44.7" r="0.4"/><circle cx="12.3" cy="34.3" r="0.9"/><circle cx="13.9" cy="37.6" r="0.5"/><circle cx="54.2" cy="28.5" r="0.7"/><circle cx="42.8" cy="8.7" r="0.8"/><circle cx="51.2" cy="55.0" r="0.5"/><circle cx="15.0" cy="10.6" r="0.8"/><circle cx="28.0" cy="24.9" r="0.7"/><circle cx="44.7" cy="20.4" r="0.6"/><circle cx="49.0" cy="49.7" r="0.5"/><circle cx="4.7" cy="59.4" r="0.8"/><circle cx="38.0" cy="25.9" r="0.9"/><circle cx="27.6" cy="13.9" r="0.5"/><circle cx="22.5" cy="38.4" r="0.6"/><circle cx="60.6" cy="41.6" r="0.6"/><circle cx="42.3" cy="38.5" r="0.7"/><circle cx="31.7" cy="33.5" r="0.6"/><circle cx="53.2" cy="12.3" r="0.8"/><circle cx="19.1" cy="54.3" r="0.4"/><circle cx="31.0" cy="28.3" r="0.8"/><circle cx="13.0" cy="16.8" r="0.5"/><circle cx="35.9" cy="36.9" r="0.4"/><circle cx="11.4" cy="12.8" r="0.9"/><circle cx="29.1" cy="36.2" r="0.5"/><circle cx="42.2" cy="52.0" r="0.7"/><circle cx="0.1" cy="28.1" r="0.6"/><circle cx="2.9" cy="50.6" r="0.6"/><circle cx="18.8" cy="40.0" r="0.7"/><circle cx="31.8" cy="55.0" r="0.7"/><circle cx="22.0" cy="4.1" r="0.7"/><circle cx="23.3" cy="34.3" r="0.6"/><circle cx="0.4" cy="2.4" r="0.5"/><circle cx="6.0" cy="54.5" r="0.7"/><circle cx="15.3" cy="45.5" r="0.7"/><circle cx="4.0" cy="48.1" r="0.5"/><circle cx="63.8" cy="9.1" r="0.5"/><circle cx="15.9" cy="55.2" r="0.8"/><circle cx="37.1" cy="9.5" r="0.6"/><circle cx="44.9" cy="3.7" r="0.9"/><circle cx="53.8" cy="59.6" r="0.7"/><circle cx="39.5" cy="62.4" r="0.5"/><circle cx="19.6" cy="7.9" r="0.5"/><circle cx="51.1" cy="6.1" r="0.8"/><circle cx="25.4" cy="56.2" r="0.8"/><circle cx="44.0" cy="54.1" r="0.4"/><circle cx="17.0" cy="23.6" r="0.6"/><circle cx="42.9" cy="56.3" r="0.8"/><circle cx="59.4" cy="44.5" r="0.6"/><circle cx="32.5" cy="47.9" r="0.8"/><circle cx="23.7" cy="22.7" r="0.7"/><circle cx="14.6" cy="56.5" r="0.4"/><circle cx="41.5" cy="31.1" r="0.5"/><circle cx="36.5" cy="30.3" r="0.9"/><circle cx="56.6" cy="37.5" r="0.8"/><circle cx="56.6" cy="10.6" r="0.8"/><circle cx="53.3" cy="63.4" r="0.8"/><circle cx="25.1" cy="13.2" r="0.7"/><circle cx="13.5" cy="48.5" r="0.7"/><circle cx="52.8" cy="22.8" r="0.6"/><circle cx="57.9" cy="42.4" r="0.6"/><circle cx="35.9" cy="27.9" r="0.7"/><circle cx="33.1" cy="18.3" r="0.9"/><circle cx="56.7" cy="48.6" r="0.5"/><circle cx="12.4" cy="46.8" r="0.8"/><circle cx="41.8" cy="13.7" r="0.8"/><circle cx="33.5" cy="23.9" r="0.7"/><circle cx="28.7" cy="41.5" r="0.8"/><circle cx="62.9" cy="7.1" r="0.7"/><circle cx="60.5" cy="42.0" r="0.7"/><circle cx="54.6" cy="2.0" r="0.8"/><circle cx="39.9" cy="37.4" r="0.6"/></g>
<g id="bl1"><ellipse cx="-5.4" cy="-10.9" rx="4.7" ry="3.0" transform="rotate(41 -5.4 -10.9)"/><ellipse cx="9.3" cy="-13.6" rx="4.9" ry="4.2" transform="rotate(-59 9.3 -13.6)"/><ellipse cx="20.0" cy="-14.3" rx="5.6" ry="3.6" transform="rotate(-31 20.0 -14.3)"/><ellipse cx="32.1" cy="-8.7" rx="5.6" ry="4.0" transform="rotate(-4 32.1 -8.7)"/><ellipse cx="58.5" cy="-14.0" rx="6.1" ry="4.2" transform="rotate(-41 58.5 -14.0)"/><ellipse cx="69.0" cy="-9.8" rx="3.5" ry="2.1" transform="rotate(33 69.0 -9.8)"/><ellipse cx="84.4" cy="-13.6" rx="3.5" ry="3.1" transform="rotate(-30 84.4 -13.6)"/><ellipse cx="95.7" cy="-10.7" rx="5.6" ry="4.6" transform="rotate(37 95.7 -10.7)"/><ellipse cx="-10.1" cy="-2.6" rx="5.0" ry="3.8" transform="rotate(-11 -10.1 -2.6)"/><ellipse cx="2.5" cy="2.3" rx="4.5" ry="3.2" transform="rotate(-3 2.5 2.3)"/><ellipse cx="11.9" cy="-0.1" rx="4.1" ry="3.7" transform="rotate(-40 11.9 -0.1)"/><ellipse cx="29.0" cy="-0.0" rx="4.8" ry="3.7" transform="rotate(35 29.0 -0.0)"/><ellipse cx="39.4" cy="-1.1" rx="6.1" ry="3.7" transform="rotate(25 39.4 -1.1)"/><ellipse cx="51.1" cy="2.6" rx="4.4" ry="3.4" transform="rotate(-21 51.1 2.6)"/><ellipse cx="63.0" cy="2.5" rx="3.9" ry="2.8" transform="rotate(-40 63.0 2.5)"/><ellipse cx="79.1" cy="2.4" rx="6.1" ry="4.3" transform="rotate(-40 79.1 2.4)"/><ellipse cx="91.5" cy="2.3" rx="4.8" ry="3.3" transform="rotate(-29 91.5 2.3)"/><ellipse cx="-8.0" cy="12.1" rx="4.6" ry="3.3" transform="rotate(34 -8.0 12.1)"/><ellipse cx="8.5" cy="9.0" rx="4.1" ry="2.7" transform="rotate(-7 8.5 9.0)"/><ellipse cx="18.9" cy="13.9" rx="5.2" ry="3.2" transform="rotate(-41 18.9 13.9)"/><ellipse cx="32.4" cy="10.2" rx="6.1" ry="4.6" transform="rotate(33 32.4 10.2)"/><ellipse cx="48.2" cy="14.1" rx="4.4" ry="2.7" transform="rotate(-13 48.2 14.1)"/><ellipse cx="58.1" cy="12.2" rx="5.8" ry="3.9" transform="rotate(8 58.1 12.2)"/><ellipse cx="69.3" cy="13.0" rx="4.5" ry="2.7" transform="rotate(31 69.3 13.0)"/><ellipse cx="98.4" cy="13.8" rx="5.0" ry="3.3" transform="rotate(-9 98.4 13.8)"/><ellipse cx="-11.1" cy="21.2" rx="3.8" ry="2.7" transform="rotate(-37 -11.1 21.2)"/><ellipse cx="10.8" cy="25.6" rx="5.2" ry="3.1" transform="rotate(8 10.8 25.6)"/><ellipse cx="25.4" cy="25.7" rx="5.1" ry="3.2" transform="rotate(49 25.4 25.7)"/><ellipse cx="40.3" cy="23.7" rx="3.5" ry="2.9" transform="rotate(51 40.3 23.7)"/><ellipse cx="49.3" cy="26.0" rx="4.5" ry="4.0" transform="rotate(-10 49.3 26.0)"/><ellipse cx="63.1" cy="24.7" rx="4.1" ry="3.4" transform="rotate(-20 63.1 24.7)"/><ellipse cx="76.5" cy="21.3" rx="5.4" ry="5.1" transform="rotate(44 76.5 21.3)"/><ellipse cx="91.3" cy="26.1" rx="3.7" ry="2.9" transform="rotate(5 91.3 26.1)"/><ellipse cx="-7.6" cy="35.2" rx="4.2" ry="3.4" transform="rotate(37 -7.6 35.2)"/><ellipse cx="3.9" cy="37.0" rx="6.1" ry="4.2" transform="rotate(-20 3.9 37.0)"/><ellipse cx="19.0" cy="37.3" rx="5.2" ry="4.2" transform="rotate(43 19.0 37.3)"/><ellipse cx="32.2" cy="35.8" rx="3.5" ry="2.8" transform="rotate(-4 32.2 35.8)"/><ellipse cx="45.6" cy="37.4" rx="3.6" ry="2.0" transform="rotate(24 45.6 37.4)"/><ellipse cx="57.0" cy="36.3" rx="5.7" ry="4.8" transform="rotate(-2 57.0 36.3)"/><ellipse cx="70.9" cy="34.1" rx="4.0" ry="3.7" transform="rotate(23 70.9 34.1)"/><ellipse cx="84.4" cy="35.1" rx="5.4" ry="4.9" transform="rotate(39 84.4 35.1)"/><ellipse cx="98.3" cy="35.8" rx="5.4" ry="4.3" transform="rotate(44 98.3 35.8)"/><ellipse cx="-14.5" cy="49.3" rx="4.5" ry="3.6" transform="rotate(45 -14.5 49.3)"/><ellipse cx="1.3" cy="49.3" rx="3.9" ry="2.4" transform="rotate(52 1.3 49.3)"/><ellipse cx="10.9" cy="47.1" rx="3.6" ry="2.4" transform="rotate(60 10.9 47.1)"/><ellipse cx="27.5" cy="49.7" rx="6.2" ry="3.8" transform="rotate(-5 27.5 49.7)"/><ellipse cx="38.0" cy="47.6" rx="5.3" ry="3.5" transform="rotate(-57 38.0 47.6)"/><ellipse cx="50.5" cy="48.9" rx="3.8" ry="3.1" transform="rotate(-35 50.5 48.9)"/><ellipse cx="66.1" cy="48.1" rx="3.8" ry="2.7" transform="rotate(-9 66.1 48.1)"/><ellipse cx="78.7" cy="45.5" rx="3.9" ry="2.7" transform="rotate(-26 78.7 45.5)"/><ellipse cx="93.9" cy="45.1" rx="4.4" ry="3.5" transform="rotate(51 93.9 45.1)"/><ellipse cx="-9.4" cy="58.5" rx="3.5" ry="2.8" transform="rotate(29 -9.4 58.5)"/><ellipse cx="9.4" cy="61.1" rx="3.8" ry="3.6" transform="rotate(-36 9.4 61.1)"/><ellipse cx="21.9" cy="57.7" rx="3.8" ry="3.3" transform="rotate(45 21.9 57.7)"/><ellipse cx="34.5" cy="57.4" rx="4.6" ry="4.1" transform="rotate(-29 34.5 57.4)"/><ellipse cx="47.3" cy="60.6" rx="6.0" ry="5.4" transform="rotate(-58 47.3 60.6)"/><ellipse cx="55.9" cy="58.1" rx="5.7" ry="5.4" transform="rotate(24 55.9 58.1)"/><ellipse cx="68.9" cy="60.4" rx="5.1" ry="4.1" transform="rotate(0 68.9 60.4)"/><ellipse cx="85.6" cy="56.4" rx="3.8" ry="2.5" transform="rotate(21 85.6 56.4)"/><ellipse cx="99.8" cy="55.9" rx="3.6" ry="2.7" transform="rotate(26 99.8 55.9)"/><ellipse cx="-13.8" cy="69.3" rx="3.9" ry="3.0" transform="rotate(-25 -13.8 69.3)"/><ellipse cx="0.9" cy="68.1" rx="3.7" ry="3.4" transform="rotate(8 0.9 68.1)"/><ellipse cx="11.2" cy="68.4" rx="6.1" ry="4.4" transform="rotate(-19 11.2 68.4)"/><ellipse cx="24.3" cy="67.4" rx="4.4" ry="3.3" transform="rotate(20 24.3 67.4)"/><ellipse cx="36.1" cy="69.4" rx="4.7" ry="4.2" transform="rotate(-4 36.1 69.4)"/><ellipse cx="54.4" cy="71.3" rx="4.0" ry="3.5" transform="rotate(55 54.4 71.3)"/><ellipse cx="65.6" cy="67.9" rx="4.3" ry="2.7" transform="rotate(-1 65.6 67.9)"/><ellipse cx="79.8" cy="67.3" rx="4.4" ry="3.5" transform="rotate(17 79.8 67.3)"/><ellipse cx="-5.0" cy="80.0" rx="6.1" ry="4.6" transform="rotate(-8 -5.0 80.0)"/><ellipse cx="9.5" cy="82.2" rx="5.6" ry="4.7" transform="rotate(52 9.5 82.2)"/><ellipse cx="22.0" cy="80.3" rx="5.1" ry="3.5" transform="rotate(25 22.0 80.3)"/><ellipse cx="31.7" cy="79.7" rx="3.5" ry="2.5" transform="rotate(14 31.7 79.7)"/><ellipse cx="48.4" cy="83.3" rx="5.5" ry="3.5" transform="rotate(8 48.4 83.3)"/><ellipse cx="60.9" cy="82.0" rx="3.7" ry="2.4" transform="rotate(-6 60.9 82.0)"/><ellipse cx="71.3" cy="81.9" rx="3.9" ry="2.5" transform="rotate(-37 71.3 81.9)"/><ellipse cx="83.8" cy="81.8" rx="4.1" ry="3.2" transform="rotate(-2 83.8 81.8)"/><ellipse cx="99.2" cy="80.9" rx="4.6" ry="3.1" transform="rotate(-43 99.2 80.9)"/></g>
<g id="bl2"><ellipse cx="-9.6" cy="-11.8" rx="6.5" ry="5.7" transform="rotate(5 -9.6 -11.8)"/><ellipse cx="20.6" cy="-10.7" rx="6.9" ry="5.1" transform="rotate(41 20.6 -10.7)"/><ellipse cx="34.2" cy="-11.1" rx="5.1" ry="4.8" transform="rotate(55 34.2 -11.1)"/><ellipse cx="46.4" cy="-15.3" rx="4.6" ry="3.2" transform="rotate(30 46.4 -15.3)"/><ellipse cx="63.6" cy="-13.5" rx="6.0" ry="5.6" transform="rotate(43 63.6 -13.5)"/><ellipse cx="75.2" cy="-13.1" rx="3.6" ry="2.9" transform="rotate(56 75.2 -13.1)"/><ellipse cx="92.3" cy="-14.4" rx="4.7" ry="3.6" transform="rotate(45 92.3 -14.4)"/><ellipse cx="-12.5" cy="2.5" rx="4.3" ry="3.6" transform="rotate(29 -12.5 2.5)"/><ellipse cx="1.0" cy="-1.3" rx="3.7" ry="2.5" transform="rotate(-34 1.0 -1.3)"/><ellipse cx="12.2" cy="0.8" rx="3.8" ry="2.7" transform="rotate(11 12.2 0.8)"/><ellipse cx="26.5" cy="-1.7" rx="5.1" ry="3.1" transform="rotate(-16 26.5 -1.7)"/><ellipse cx="53.2" cy="-2.2" rx="5.3" ry="3.4" transform="rotate(7 53.2 -2.2)"/><ellipse cx="67.0" cy="-2.0" rx="6.6" ry="4.0" transform="rotate(-46 67.0 -2.0)"/><ellipse cx="83.5" cy="0.1" rx="6.7" ry="3.7" transform="rotate(-25 83.5 0.1)"/><ellipse cx="5.2" cy="10.5" rx="5.1" ry="3.0" transform="rotate(-49 5.2 10.5)"/><ellipse cx="18.1" cy="14.7" rx="6.0" ry="5.4" transform="rotate(29 18.1 14.7)"/><ellipse cx="36.6" cy="11.2" rx="5.6" ry="5.0" transform="rotate(9 36.6 11.2)"/><ellipse cx="47.1" cy="15.6" rx="4.6" ry="2.5" transform="rotate(-26 47.1 15.6)"/><ellipse cx="65.4" cy="11.1" rx="6.9" ry="4.4" transform="rotate(36 65.4 11.1)"/><ellipse cx="76.1" cy="10.7" rx="5.8" ry="4.0" transform="rotate(-46 76.1 10.7)"/><ellipse cx="90.9" cy="9.8" rx="5.1" ry="4.1" transform="rotate(-39 90.9 9.8)"/><ellipse cx="-13.5" cy="22.6" rx="5.8" ry="3.3" transform="rotate(-42 -13.5 22.6)"/><ellipse cx="1.5" cy="24.0" rx="5.1" ry="4.0" transform="rotate(2 1.5 24.0)"/><ellipse cx="11.9" cy="26.5" rx="5.9" ry="5.5" transform="rotate(-39 11.9 26.5)"/><ellipse cx="30.9" cy="27.4" rx="4.2" ry="3.7" transform="rotate(42 30.9 27.4)"/><ellipse cx="41.9" cy="22.6" rx="6.9" ry="4.8" transform="rotate(-60 41.9 22.6)"/><ellipse cx="53.8" cy="27.6" rx="5.2" ry="4.0" transform="rotate(25 53.8 27.6)"/><ellipse cx="72.9" cy="23.5" rx="4.4" ry="3.6" transform="rotate(-53 72.9 23.5)"/><ellipse cx="84.0" cy="23.7" rx="4.2" ry="3.2" transform="rotate(-57 84.0 23.7)"/><ellipse cx="-6.8" cy="38.7" rx="6.9" ry="4.2" transform="rotate(3 -6.8 38.7)"/><ellipse cx="6.2" cy="39.7" rx="4.0" ry="2.4" transform="rotate(45 6.2 39.7)"/><ellipse cx="19.4" cy="37.7" rx="4.1" ry="2.5" transform="rotate(-43 19.4 37.7)"/><ellipse cx="37.7" cy="39.8" rx="5.2" ry="2.9" transform="rotate(-57 37.7 39.8)"/><ellipse cx="46.7" cy="38.0" rx="4.4" ry="2.9" transform="rotate(57 46.7 38.0)"/><ellipse cx="65.0" cy="36.1" rx="6.4" ry="4.4" transform="rotate(34 65.0 36.1)"/><ellipse cx="79.2" cy="38.4" rx="5.8" ry="4.6" transform="rotate(15 79.2 38.4)"/><ellipse cx="91.4" cy="39.2" rx="5.3" ry="3.6" transform="rotate(51 91.4 39.2)"/><ellipse cx="-13.0" cy="50.7" rx="5.4" ry="3.1" transform="rotate(3 -13.0 50.7)"/><ellipse cx="2.3" cy="49.8" rx="4.6" ry="3.4" transform="rotate(48 2.3 49.8)"/><ellipse cx="12.2" cy="50.0" rx="6.8" ry="5.6" transform="rotate(-42 12.2 50.0)"/><ellipse cx="27.2" cy="51.8" rx="6.9" ry="6.2" transform="rotate(-49 27.2 51.8)"/><ellipse cx="44.5" cy="52.8" rx="5.8" ry="3.3" transform="rotate(-25 44.5 52.8)"/><ellipse cx="59.1" cy="51.1" rx="6.5" ry="5.8" transform="rotate(-12 59.1 51.1)"/><ellipse cx="70.9" cy="51.4" rx="4.1" ry="3.6" transform="rotate(-50 70.9 51.4)"/><ellipse cx="85.9" cy="50.2" rx="4.8" ry="4.4" transform="rotate(19 85.9 50.2)"/><ellipse cx="-5.0" cy="64.7" rx="6.5" ry="4.2" transform="rotate(24 -5.0 64.7)"/><ellipse cx="7.2" cy="62.9" rx="6.8" ry="5.8" transform="rotate(34 7.2 62.9)"/><ellipse cx="22.1" cy="60.2" rx="6.7" ry="5.8" transform="rotate(9 22.1 60.2)"/><ellipse cx="37.9" cy="62.9" rx="6.9" ry="6.0" transform="rotate(7 37.9 62.9)"/><ellipse cx="49.6" cy="59.8" rx="5.3" ry="3.3" transform="rotate(29 49.6 59.8)"/><ellipse cx="76.8" cy="60.3" rx="4.1" ry="3.0" transform="rotate(-38 76.8 60.3)"/><ellipse cx="-13.0" cy="74.5" rx="4.6" ry="4.1" transform="rotate(35 -13.0 74.5)"/><ellipse cx="-2.4" cy="74.9" rx="5.5" ry="4.8" transform="rotate(-41 -2.4 74.9)"/><ellipse cx="12.0" cy="78.5" rx="4.4" ry="2.5" transform="rotate(51 12.0 78.5)"/><ellipse cx="40.9" cy="76.0" rx="6.3" ry="4.0" transform="rotate(-24 40.9 76.0)"/><ellipse cx="55.0" cy="75.6" rx="4.7" ry="3.5" transform="rotate(47 55.0 75.6)"/><ellipse cx="69.8" cy="72.9" rx="6.0" ry="3.5" transform="rotate(47 69.8 72.9)"/><ellipse cx="84.0" cy="72.7" rx="5.7" ry="4.9" transform="rotate(12 84.0 72.7)"/></g>
<g id="e3"><ellipse cx="63.4" cy="-3.3" rx="5.7" ry="2.8" transform="rotate(46 63.4 -3.3)"/><ellipse cx="38.1" cy="-6.1" rx="5.2" ry="2.4" transform="rotate(40 38.1 -6.1)"/><ellipse cx="52.3" cy="3.8" rx="5.2" ry="2.1" transform="rotate(34 52.3 3.8)"/><ellipse cx="64.8" cy="8.6" rx="4.2" ry="1.8" transform="rotate(38 64.8 8.6)"/><ellipse cx="27.8" cy="-2.7" rx="5.5" ry="3.1" transform="rotate(29 27.8 -2.7)"/><ellipse cx="41.6" cy="6.1" rx="4.9" ry="2.2" transform="rotate(23 41.6 6.1)"/><ellipse cx="54.8" cy="14.2" rx="3.4" ry="2.4" transform="rotate(42 54.8 14.2)"/><ellipse cx="62.0" cy="21.8" rx="4.4" ry="2.3" transform="rotate(47 62.0 21.8)"/><ellipse cx="10.7" cy="-5.9" rx="5.5" ry="2.6" transform="rotate(34 10.7 -5.9)"/><ellipse cx="43.7" cy="18.9" rx="3.9" ry="3.2" transform="rotate(26 43.7 18.9)"/><ellipse cx="51.2" cy="24.1" rx="6.0" ry="2.2" transform="rotate(30 51.2 24.1)"/><ellipse cx="65.7" cy="33.5" rx="5.1" ry="2.3" transform="rotate(23 65.7 33.5)"/><ellipse cx="-0.9" cy="-1.3" rx="5.2" ry="3.1" transform="rotate(32 -0.9 -1.3)"/><ellipse cx="11.6" cy="5.2" rx="4.5" ry="2.8" transform="rotate(38 11.6 5.2)"/><ellipse cx="20.9" cy="11.5" rx="5.5" ry="2.5" transform="rotate(34 20.9 11.5)"/><ellipse cx="29.7" cy="18.6" rx="5.7" ry="2.4" transform="rotate(36 29.7 18.6)"/><ellipse cx="42.5" cy="28.8" rx="4.6" ry="2.7" transform="rotate(27 42.5 28.8)"/><ellipse cx="63.1" cy="41.6" rx="6.1" ry="2.8" transform="rotate(42 63.1 41.6)"/><ellipse cx="-3.9" cy="7.9" rx="4.0" ry="2.7" transform="rotate(46 -3.9 7.9)"/><ellipse cx="12.3" cy="17.6" rx="4.2" ry="2.5" transform="rotate(46 12.3 17.6)"/><ellipse cx="22.5" cy="24.3" rx="5.3" ry="2.9" transform="rotate(23 22.5 24.3)"/><ellipse cx="33.6" cy="31.3" rx="6.0" ry="3.2" transform="rotate(47 33.6 31.3)"/><ellipse cx="66.6" cy="57.3" rx="5.2" ry="2.7" transform="rotate(25 66.6 57.3)"/><ellipse cx="0.4" cy="19.8" rx="5.6" ry="2.3" transform="rotate(37 0.4 19.8)"/><ellipse cx="7.9" cy="26.6" rx="4.7" ry="2.2" transform="rotate(22 7.9 26.6)"/><ellipse cx="19.3" cy="35.8" rx="5.6" ry="2.0" transform="rotate(39 19.3 35.8)"/><ellipse cx="33.6" cy="45.1" rx="4.0" ry="2.0" transform="rotate(41 33.6 45.1)"/><ellipse cx="44.4" cy="52.8" rx="4.1" ry="2.6" transform="rotate(43 44.4 52.8)"/><ellipse cx="67.2" cy="66.0" rx="4.3" ry="2.9" transform="rotate(25 67.2 66.0)"/><ellipse cx="0.9" cy="32.5" rx="3.5" ry="3.1" transform="rotate(44 0.9 32.5)"/><ellipse cx="12.0" cy="39.3" rx="5.6" ry="3.1" transform="rotate(24 12.0 39.3)"/><ellipse cx="20.9" cy="47.3" rx="3.9" ry="3.0" transform="rotate(21 20.9 47.3)"/><ellipse cx="33.1" cy="52.8" rx="5.8" ry="2.7" transform="rotate(31 33.1 52.8)"/><ellipse cx="44.0" cy="63.8" rx="3.8" ry="2.2" transform="rotate(37 44.0 63.8)"/><ellipse cx="55.5" cy="70.0" rx="5.7" ry="2.6" transform="rotate(37 55.5 70.0)"/><ellipse cx="0.1" cy="44.7" rx="4.2" ry="2.0" transform="rotate(28 0.1 44.7)"/><ellipse cx="9.8" cy="51.5" rx="5.7" ry="2.6" transform="rotate(37 9.8 51.5)"/><ellipse cx="23.4" cy="61.0" rx="5.3" ry="3.2" transform="rotate(25 23.4 61.0)"/><ellipse cx="34.0" cy="65.1" rx="5.6" ry="2.4" transform="rotate(28 34.0 65.1)"/><ellipse cx="0.5" cy="55.8" rx="5.5" ry="3.1" transform="rotate(30 0.5 55.8)"/><ellipse cx="1.5" cy="64.3" rx="5.4" ry="3.1" transform="rotate(34 1.5 64.3)"/></g><g id="g3"><circle cx="41.2" cy="1.4" r="3.2"/><circle cx="55.4" cy="11.3" r="3.8"/><circle cx="30.9" cy="4.8" r="3.6"/><circle cx="44.6" cy="13.7" r="2.7"/><circle cx="57.9" cy="21.7" r="3.1"/><circle cx="54.2" cy="31.6" r="3.7"/><circle cx="2.2" cy="6.2" r="3.7"/><circle cx="14.7" cy="12.7" r="3.0"/><circle cx="24.0" cy="19.0" r="3.9"/><circle cx="45.6" cy="36.3" r="3.2"/><circle cx="15.4" cy="25.2" r="3.1"/><circle cx="25.6" cy="31.8" r="3.9"/><circle cx="36.7" cy="38.8" r="3.8"/><circle cx="3.5" cy="27.3" r="4.0"/><circle cx="22.4" cy="43.3" r="2.8"/><circle cx="36.7" cy="52.6" r="3.9"/><circle cx="3.9" cy="40.0" r="3.6"/><circle cx="15.1" cy="46.8" r="3.5"/><circle cx="23.9" cy="54.8" r="3.9"/><circle cx="12.9" cy="59.0" r="3.0"/></g>
<filter id="b12" x="-10%" y="-10%" width="120%" height="120%"><feGaussianBlur stdDeviation="1.3"/></filter>
</defs>
<g transform="translate(4 15)" clip-path="url(#c64)"><rect width="64" height="64" filter="url(#f02)"/><use href="#bl1" fill="#900000" filter="url(#b20)" opacity=".7"/><use href="#bl1" fill="#520000" filter="url(#b12)" opacity=".92"/></g>
<g transform="translate(78 15)" clip-path="url(#c64)"><rect width="64" height="64" filter="url(#f4a)"/><use href="#g3" fill="#9494bc" filter="url(#b20)"/><use href="#e3" fill="none" stroke="#5c4c40" stroke-width="3.2" filter="url(#b07)"/><use href="#e3" fill="#34365a" filter="url(#b07)"/></g>
<g transform="translate(152 15)" clip-path="url(#c64)"><rect x="-40" y="-40" width="150" height="150" transform="rotate(38 32 32)" filter="url(#f4m)"/></g>
<rect x="224" y="13" width="68" height="68" fill="#f2ae08"/>
<g transform="translate(226 15)" clip-path="url(#c64)"><rect width="64" height="64" filter="url(#fpw)"/><use href="#g1" fill="#ffffff" filter="url(#b20)"/><use href="#e1" fill="none" stroke="#5c5c8c" stroke-width="2.6" filter="url(#b07)" opacity=".8"/><use href="#e1" fill="#12122a" filter="url(#b07)"/></g>
<g transform="translate(300 15)" clip-path="url(#c64)"><rect width="64" height="64" filter="url(#fpw)"/><use href="#g1" fill="#ffffff" filter="url(#b20)"/><use href="#e1" fill="none" stroke="#5c5c8c" stroke-width="2.6" filter="url(#b07)" opacity=".8"/><use href="#e1" fill="#12122a" filter="url(#b07)"/></g>
<g transform="translate(4 126)" clip-path="url(#c64)"><rect width="64" height="64" filter="url(#fbl1)"/></g>
<g transform="translate(78 126)" clip-path="url(#c64)"><rect width="64" height="64" filter="url(#flv)"/><use href="#bl2" fill="#b01c00" filter="url(#b20)" opacity=".7"/><use href="#bl2" fill="#480000" filter="url(#b12)" transform="translate(32 32) scale(.88) translate(-32 -32)"/></g>
<g transform="translate(152 126)" clip-path="url(#c64)"><rect width="64" height="64" filter="url(#frf)"/><use href="#g1" fill="#ffe0f8" filter="url(#b20)"/><use href="#e1" fill="none" stroke="#7c4860" stroke-width="2.6" filter="url(#b07)" opacity=".8"/><use href="#e1" fill="#2a0e10" filter="url(#b07)"/></g>
<g transform="translate(226 126)" clip-path="url(#c64)"><rect width="64" height="64" filter="url(#fsl)"/></g>
<rect x="298" y="124" width="68" height="68" fill="#f2ae08"/>
<g transform="translate(300 126)" clip-path="url(#c64)"><rect width="64" height="64" fill="#030303"/><use href="#tp" fill="#cc9c6c"/></g>
</svg>
<div class="tl" style="left:36px;top:81px;color:#e4e4e4">*02owat</div><div class="tl" style="left:36px;top:96px;color:#8e8e8e">quake.wad</div>
<div class="tl" style="left:110px;top:81px;color:#e4e4e4">*04awater1</div><div class="tl" style="left:110px;top:96px;color:#8e8e8e">quake.wad</div>
<div class="tl" style="left:184px;top:81px;color:#e4e4e4">*04mwat1</div><div class="tl" style="left:184px;top:96px;color:#8e8e8e">quake.wad</div>
<div class="tl" style="left:258px;top:81px;color:#e4e4e4">*04mwat2</div><div class="tl" style="left:258px;top:96px;color:#8e8e8e">rtz.wad</div>
<div class="tl" style="left:332px;top:81px;color:#e4e4e4">*04mwats</div><div class="tl" style="left:332px;top:96px;color:#8e8e8e">quake.wad</div>
<div class="tl" style="left:36px;top:192px;color:#e4e4e4">*blood1</div><div class="tl" style="left:36px;top:207px;color:#8e8e8e">quake.wad</div>
<div class="tl" style="left:110px;top:192px;color:#e4e4e4">*lava1</div><div class="tl" style="left:110px;top:207px;color:#8e8e8e">quake.wad</div>
<div class="tl" style="left:184px;top:192px;color:#e4e4e4">*rift1</div><div class="tl" style="left:184px;top:207px;color:#8e8e8e">quake.wad</div>
<div class="tl" style="left:258px;top:192px;color:#e4e4e4">*slime</div><div class="tl" style="left:258px;top:207px;color:#8e8e8e">quake.wad</div>
<div class="tl" style="left:332px;top:192px;color:#e4e4e4">*teleport</div><div class="tl" style="left:332px;top:207px;color:#8e8e8e">rtz.wad</div>
</div><!--tb-->
<div class="sb" style="left:385px;top:370px;width:14px;height:217px;border-left:none"></div><div class="th" style="left:389px;top:373px;height:17px"></div>
<div class="abs bar" style="left:0;top:587px;width:399px;height:39px">
<div class="btn" style="left:5px;top:7px;width:67px;text-align:left;padding-left:8px;overflow:hidden">Name<div class="abs" style="right:-1px;top:-1px;width:17px;height:21px;background:linear-gradient(#5da0fa,#1e6ff5)"><svg width="17" height="21" viewBox="0 0 17 21"><path d="M5.3 8.3 L8.5 5.1 L11.7 8.3 M5.3 12.7 L8.5 15.9 L11.7 12.7" fill="none" stroke="#fff" stroke-width="1.5" stroke-linecap="round" stroke-linejoin="round"/></svg></div></div>
<div class="btn" style="left:78px;top:7px;width:65px">Group</div>
<div class="btn" style="left:147px;top:7px;width:61px">Used</div>
<div class="abs" style="left:211px;top:7px;width:187px;height:20px;background:#fff;border:1px solid #c9c9c9"></div>
<svg class="abs" style="left:218px;top:9px" width="16" height="16" viewBox="0 0 16 16"><circle cx="6" cy="6" r="3.8" fill="#e4e4e4" stroke="#555" stroke-width="1.3"/><path d="M8.9 8.9 L13 13" stroke="#555" stroke-width="2" stroke-linecap="round"/></svg>
<div class="t" style="left:238px;top:9px;color:#8a8a8a;letter-spacing:.2px">Search...</div>
</div>
<div class="hline" style="top:626px"></div>
<div class="hdr" style="top:630px"><span style="letter-spacing:.12px">Texture Collections</span><div class="show" style="top:1px">show</div></div>
</div>

</div>
</body>
</html>
